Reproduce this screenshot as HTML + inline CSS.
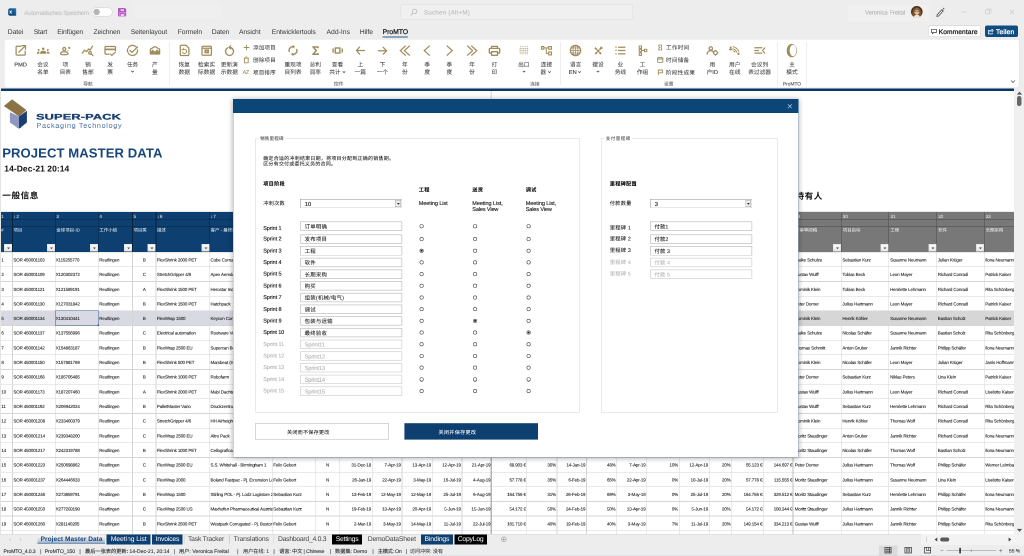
<!DOCTYPE html>
<html lang="zh"><head><meta charset="utf-8"><title>ProMTO</title>
<style>
html,body{margin:0;padding:0;}
body{width:1024px;height:556px;overflow:hidden;position:relative;background:#fff;font-family:"Liberation Sans","Noto Sans CJK SC",sans-serif;}
div,span.t{position:absolute;box-sizing:border-box;}
span.t{white-space:nowrap;text-rendering:geometricPrecision;}
span.k{-webkit-text-stroke:.12px;}
span.j{-webkit-text-stroke:.04px;}
svg{position:absolute;overflow:visible;}
#w{left:0;top:0;width:1024px;height:556px;overflow:hidden;zoom:2;transform:scale(.5);transform-origin:0 0;will-change:transform;}

.rb{background:#fff;border-radius:2.5px;box-shadow:0 0 1px rgba(0,0,0,.16);}
span.c{letter-spacing:-.115px;-webkit-text-stroke:.08px #1a1a1a;}
.inp{border:0.7px solid #c6c6c6;background:#fff;}
.radio{border:0.55px solid #4a4a4a;border-radius:50%;background:#fff;}

</style></head><body><div id="w">
<div style="left:0.00px;top:0.00px;width:1024.00px;height:91.00px;background:#ededed;"></div>
<div style="left:133.40px;top:3.60px;width:88.00px;height:14.40px;background:#efefef;"></div>
<div style="left:848.00px;top:4.80px;width:81.50px;height:16.20px;background:#f0f0f0;"></div>
<svg style="left:7.80px;top:7.80px" width="8.4" height="8.2" viewBox="0 0 8.4 8.2" ><defs><linearGradient id="xg" x1="1" y1="0" x2="0" y2="1"><stop offset="0" stop-color="#2a7fbe"/><stop offset=".55" stop-color="#125289"/><stop offset="1" stop-color="#0a3a68"/></linearGradient></defs><path d="M1.800.3H7.600a.6.600 0 0 1 .6.600V7.200a.6.600 0 0 1-.6.600H1.800L.2 6.700V1.400z" fill="url(#xg)"/><path d="M1.600 2.600 3.700 5.600M3.700 2.600 1.600 5.600" stroke="#fff" stroke-width=".75"/><path d="M5.300 1.200V7" stroke="#0b3a66" stroke-width=".5" opacity=".6"/></svg>
<span class="t k" style="font-size:6.2px;color:#c2c2c2;line-height:7px;top:9.5px;left:24.30px;letter-spacing:-0.246px;">Automatisches Speichern</span>
<div style="left:91.40px;top:7.30px;width:21.30px;height:9.30px;background:#fdfdfd;border:0.8px solid #cdcdcd;border-radius:4.700px;"></div>
<svg style="left:93.00px;top:8.50px" width="7.2" height="7.2" viewBox="0 0 7.2 7.2" ><circle cx="3.600" cy="3.500" r="3.150" fill="#b5b5b5"/></svg>
<svg style="left:118.10px;top:8.00px" width="8.2" height="8.4" viewBox="0 0 8.2 8.4" ><path d="M0 .7a.7.700 0 0 1 .7-.7h6.200l1.300 1.300v6.400a.7.700 0 0 1-.7.700h-6.800a.7.700 0 0 1-.7-.7z" fill="#b257c2"/><rect x="2.600" y="1.400" width="3.400" height="1.300" fill="#fbf3fc"/><rect x="2.800" y="6.200" width="3" height="1.600" fill="#fbf3fc"/><path d="M1.500 8V4.300h5.400V8" fill="none" stroke="#d9a9e2" stroke-width=".55"/></svg>
<div style="left:400.50px;top:4.20px;width:232.30px;height:15.10px;background:#f0f0f0;border:0.8px solid #dcdcdc;border-radius:2px;"></div>
<svg style="left:410.00px;top:8.50px" width="7.5" height="7.5" viewBox="0 0 7.5 7.5" ><circle cx="4.600" cy="2.900" r="2.300" fill="none" stroke="#b5b5b5" stroke-width=".8"/><path d="M3 4.600.6 7" stroke="#b5b5b5" stroke-width=".8"/></svg>
<span class="t k" style="font-size:6.2px;color:#bcbcbc;line-height:7px;top:9.0px;left:424.00px;letter-spacing:0.223px;">Suchen (Alt+M)</span>
<span class="t k" style="font-size:6px;color:#b3b3b3;line-height:6px;top:9.5px;left:865.00px;letter-spacing:-0.087px;">Veronica Freital</span>
<svg style="left:911.00px;top:6.20px" width="11.6" height="11.6" viewBox="0 0 11.6 11.6" ><clipPath id="av"><circle cx="5.800" cy="5.800" r="5.800"/></clipPath><g clip-path="url(#av)"><rect width="11.600" height="11.600" fill="#4a2c18"/><path d="M1 11.600C1 5 2 1.500 5.800 1.500S10.600 5 10.600 11.600z" fill="#7b5230"/><ellipse cx="5.900" cy="5.700" rx="2.500" ry="3.100" fill="#e6bb98"/><path d="M3.200 5c.3-2.300 5-2.400 5.400 0-1.400-1.100-3.800-1.100-5.400 0z" fill="#5d3a20"/><path d="M3.600 5.600h1.900M6.300 5.600h1.900" stroke="#3a2a22" stroke-width=".5"/><path d="M2.500 11.600c.6-2.200 2-2.900 3.400-2.900s2.800.7 3.400 2.900z" fill="#efe6dc"/></g></svg>
<svg style="left:935.00px;top:7.00px" width="10" height="10" viewBox="0 0 10 10" ><path d="M2.200 7.800 1.800 9.400l1.700-.3 4.800-5.200-1.400-1.300z" fill="#fff" stroke="#444" stroke-width=".8" stroke-linejoin="round"/><circle cx="8.600" cy="1.600" r=".8" fill="#3b78c0"/></svg>
<svg style="left:960.00px;top:8.00px" width="60" height="9" viewBox="0 0 60 9" ><path d="M1.500 4h5" stroke="#d0d0d0" stroke-width=".8"/><rect x="25.500" y="1.800" width="4.200" height="4.200" rx=".8" fill="none" stroke="#cfcfcf" stroke-width=".8"/><path d="M27 1.800v-.8h4v4h-.8" fill="none" stroke="#cfcfcf" stroke-width=".7"/><path d="M49.800 1.800l4.200 4.400M54 1.800l-4.200 4.400" stroke="#cfcfcf" stroke-width=".8"/></svg>
<span class="t" style="font-size:6.8px;color:#3a3a3a;line-height:7px;top:28.5px;left:7.75px;letter-spacing:-0.073px;">Datei</span>
<span class="t" style="font-size:6.8px;color:#3a3a3a;line-height:7px;top:28.5px;left:33.75px;letter-spacing:-0.222px;">Start</span>
<span class="t" style="font-size:6.8px;color:#3a3a3a;line-height:7px;top:28.5px;left:57.25px;letter-spacing:-0.136px;">Einfügen</span>
<span class="t" style="font-size:6.8px;color:#3a3a3a;line-height:7px;top:28.5px;left:93.50px;letter-spacing:-0.151px;">Zeichnen</span>
<span class="t" style="font-size:6.8px;color:#3a3a3a;line-height:7px;top:28.5px;left:130.75px;letter-spacing:-0.097px;">Seitenlayout</span>
<span class="t" style="font-size:6.8px;color:#3a3a3a;line-height:7px;top:28.5px;left:177.75px;letter-spacing:-0.097px;">Formeln</span>
<span class="t" style="font-size:6.8px;color:#3a3a3a;line-height:7px;top:28.5px;left:211.75px;letter-spacing:-0.128px;">Daten</span>
<span class="t" style="font-size:6.8px;color:#3a3a3a;line-height:7px;top:28.5px;left:239.00px;letter-spacing:-0.113px;">Ansicht</span>
<span class="t" style="font-size:6.8px;color:#3a3a3a;line-height:7px;top:28.5px;left:271.75px;letter-spacing:-0.089px;">Entwicklertools</span>
<span class="t" style="font-size:6.8px;color:#3a3a3a;line-height:7px;top:28.5px;left:326.50px;letter-spacing:0.010px;">Add-Ins</span>
<span class="t" style="font-size:6.8px;color:#3a3a3a;line-height:7px;top:28.5px;left:359.75px;letter-spacing:-0.070px;">Hilfe</span>
<span class="t" style="font-size:6.8px;color:#1d1d1d;line-height:7px;top:28.5px;left:382.60px;-webkit-text-stroke:.3px;letter-spacing:-0.026px;">ProMTO</span>
<div style="left:382.60px;top:36.40px;width:25.20px;height:1.10px;background:#245a8e;border-radius:.5px;"></div>
<div style="left:928.20px;top:25.70px;width:53.00px;height:11.50px;background:#fff;border:0.8px solid #cdcdcd;border-radius:2px;"></div>
<svg style="left:930.80px;top:28.60px" width="6" height="6" viewBox="0 0 6 6" ><path d="M.6.800h4.800v3.200H2.600L1.400 5.200V4H.6z" fill="none" stroke="#333" stroke-width=".7" stroke-linejoin="round"/></svg>
<span class="t" style="font-size:6.6px;color:#262626;line-height:7px;top:28.5px;left:938.70px;-webkit-text-stroke:.32px;letter-spacing:0.125px;">Kommentare</span>
<div style="left:985.20px;top:25.70px;width:32.80px;height:11.50px;background:#0f4c81;border-radius:2px;"></div>
<svg style="left:987.60px;top:28.40px" width="6" height="6" viewBox="0 0 6 6" ><path d="M2.400 2H.8v3.400h4V4.200" fill="none" stroke="#fff" stroke-width=".7"/><path d="M2.200 3.800C2.400 2.400 3.200 1.700 4.400 1.700V.7L5.800 2 4.400 3.300V2.500" fill="none" stroke="#fff" stroke-width=".7" stroke-linejoin="round"/></svg>
<span class="t" style="font-size:6.6px;color:#fff;line-height:7px;top:28.5px;left:996.00px;-webkit-text-stroke:.32px;letter-spacing:0.194px;">Teilen</span>
<div class="rb" style="left:4.70px;top:39.70px;width:1014.40px;height:48.00px;"></div>
<svg style="left:10.60px;top:40.60px" width="20" height="20" viewBox="-10 -10 20 20" fill="none" stroke="#9f8c5a" stroke-width="1.25" stroke-linecap="round" stroke-linejoin="round"><path d="M.4-4.300H-3.500a.9.900 0 0 0-.9.900V3.700a.9.900 0 0 0 .9.900H3.800a.9.900 0 0 0 .9-.9V.600"/><path d="M-1.600 1.700 4.900-4.800M1.500-4.900H5v3.500"/></svg>
<span class="t k" style="font-size:5.7px;color:#3d3d3d;line-height:6px;top:62.0px;left:20.60px;transform:translateX(-50%);">PMD</span>
<svg style="left:32.90px;top:40.60px" width="20" height="20" viewBox="-10 -10 20 20" fill="none" stroke="#9f8c5a" stroke-width="1.25" stroke-linecap="round" stroke-linejoin="round"><circle cx=".2" cy="-1.800" r="1.250" fill="#9f8c5a" stroke="none"/><path d="M-3 3.300c0-2.200 1-3.100 3.200-3.100s3.200.9 3.200 3.100z" fill="#9f8c5a" stroke="none"/><circle cx="-4.400" cy="-.5" r=".95" fill="#9f8c5a" stroke="none"/><circle cx="4.800" cy="-.5" r=".95" fill="#9f8c5a" stroke="none"/><path d="M-6.200 3.300c0-1.500.6-2.200 1.800-2.200.5 0 .9.100 1.100.4-.4.500-.5 1.100-.5 1.800zM6.600 3.300c0-1.500-.6-2.200-1.800-2.200-.5 0-.9.100-1.100.4.400.5.500 1.100.5 1.800z" fill="#9f8c5a" stroke="none"/></svg>
<span class="t j" style="font-size:5.7px;color:#3d3d3d;line-height:6px;top:62.0px;left:42.90px;transform:translateX(-50%);">会议</span>
<span class="t j" style="font-size:5.7px;color:#3d3d3d;line-height:6px;top:69.5px;left:42.90px;transform:translateX(-50%);">名单</span>
<svg style="left:55.30px;top:40.60px" width="20" height="20" viewBox="-10 -10 20 20" fill="none" stroke="#9f8c5a" stroke-width="1.25" stroke-linecap="round" stroke-linejoin="round"><circle cx="-1.250" cy="-1.500" r="1.500"/><path d="M-5 3.300c0-1.500 1.600-2.100 3.750-2.100s3.750.6 3.750 2.100c0 .7-1.400 1-3.750 1s-3.750-.3-3.750-1z"/><circle cx="3.800" cy="-2.600" r="1.100" fill="#9f8c5a" stroke="none"/><circle cx="2.400" cy="0" r=".55" fill="#9f8c5a" stroke="none"/></svg>
<span class="t j" style="font-size:5.7px;color:#3d3d3d;line-height:6px;top:62.0px;left:65.30px;transform:translateX(-50%);">项</span>
<span class="t j" style="font-size:5.7px;color:#3d3d3d;line-height:6px;top:69.5px;left:65.30px;transform:translateX(-50%);">目表</span>
<svg style="left:78.00px;top:40.60px" width="20" height="20" viewBox="-10 -10 20 20" fill="none" stroke="#9f8c5a" stroke-width="1.25" stroke-linecap="round" stroke-linejoin="round"><path d="M-5.800 2.700-3.300-.3-1.400 1.100.7-1.600 2.100-.3 4.600-4.400"/><circle cx="2" cy="2.400" r="1.300"/><path d="M3 3.400 5 5.200"/></svg>
<span class="t j" style="font-size:5.7px;color:#3d3d3d;line-height:6px;top:62.0px;left:88.00px;transform:translateX(-50%);">销</span>
<span class="t j" style="font-size:5.7px;color:#3d3d3d;line-height:6px;top:69.5px;left:88.00px;transform:translateX(-50%);">售部</span>
<svg style="left:100.10px;top:40.60px" width="20" height="20" viewBox="-10 -10 20 20" fill="none" stroke="#9f8c5a" stroke-width="1.25" stroke-linecap="round" stroke-linejoin="round"><path d="M-1.300 3.700H-4.100a.9.900 0 0 1-.9-.9V-3.100a.9.900 0 0 1 .9-.9H4.600a.9.900 0 0 1 .9.900V.100"/><path d="M-5-1.100H5.500" stroke-width="1.700" stroke-linecap="butt"/><path d="M.2 3.400 1.800 4.900 5.400 1.600" stroke-width="1.200"/></svg>
<span class="t j" style="font-size:5.7px;color:#3d3d3d;line-height:6px;top:62.0px;left:110.10px;transform:translateX(-50%);">发</span>
<span class="t j" style="font-size:5.7px;color:#3d3d3d;line-height:6px;top:69.5px;left:110.10px;transform:translateX(-50%);">票</span>
<svg style="left:122.40px;top:40.60px" width="20" height="20" viewBox="-10 -10 20 20" fill="none" stroke="#9f8c5a" stroke-width="1.25" stroke-linecap="round" stroke-linejoin="round"><path d="M4.100-3A5.050 5.050 0 1 0 5 -.6"/><path d="M-2.500 0-.6 1.900 5-3.600"/></svg>
<span class="t j" style="font-size:5.7px;color:#3d3d3d;line-height:6px;top:62.0px;left:132.40px;transform:translateX(-50%);">任务</span>
<svg style="left:130.90px;top:70.50px" width="3" height="2" viewBox="0 0 3 2" ><path d="M.3.400l1.200 1.200L2.700.4" fill="none" stroke="#3c3c3c" stroke-width=".8"/></svg>
<svg style="left:144.80px;top:40.60px" width="20" height="20" viewBox="-10 -10 20 20" fill="none" stroke="#9f8c5a" stroke-width="1.25" stroke-linecap="round" stroke-linejoin="round"><path d="M-4.600 3.500V-1.300L0-4 4.600-1.300V3.500z"/><path d="M-4.600 3.500V1.500L-2.200-1 0 1.200 2.100-1.200 4.600 1.500V3.500z" fill="#9f8c5a" stroke="none"/></svg>
<span class="t j" style="font-size:5.7px;color:#3d3d3d;line-height:6px;top:62.0px;left:154.80px;transform:translateX(-50%);">产</span>
<span class="t j" style="font-size:5.7px;color:#3d3d3d;line-height:6px;top:69.5px;left:154.80px;transform:translateX(-50%);">量</span>
<span class="t j" style="font-size:4.8px;color:#555;line-height:5px;top:82.0px;left:88.00px;transform:translateX(-50%);">导航</span>
<div style="left:169.50px;top:42.00px;width:0.70px;height:43.00px;background:#dcdcdc;"></div>
<svg style="left:174.30px;top:40.60px" width="20" height="20" viewBox="-10 -10 20 20" fill="none" stroke="#9f8c5a" stroke-width="1.25" stroke-linecap="round" stroke-linejoin="round"><path d="M-3.300-5.200H1.500L4.400-2.300V4.100a.9.900 0 0 1-.9.900H-3.300a.9.900 0 0 1-.9-.9V-4.300a.9.900 0 0 1 .9-.9z"/><path d="M-1.400-.6A2.100 2.100 0 1 1-2 1.500" stroke-width=".9"/><path d="M-2.900-.8h1.700v-1.600" stroke-width=".8"/></svg>
<span class="t j" style="font-size:5.7px;color:#3d3d3d;line-height:6px;top:62.0px;left:184.30px;transform:translateX(-50%);">恢复</span>
<span class="t j" style="font-size:5.7px;color:#3d3d3d;line-height:6px;top:69.5px;left:184.30px;transform:translateX(-50%);">数据</span>
<svg style="left:196.60px;top:40.60px" width="20" height="20" viewBox="-10 -10 20 20" fill="none" stroke="#9f8c5a" stroke-width="1.25" stroke-linecap="round" stroke-linejoin="round"><rect x="-4.500" y="-4.300" width="9.400" height="9.100" rx="1.100"/><path d="M-4.500-2.300H4.900"/><rect x="-2.100" y="-1.100" width="4.600" height="4" rx=".4" fill="#9f8c5a" stroke="none"/><path d="M.2.300V1.500M-.4.900H.8" stroke="#e9e2d2" stroke-width=".5"/></svg>
<span class="t j" style="font-size:5.7px;color:#3d3d3d;line-height:6px;top:62.0px;left:206.60px;transform:translateX(-50%);">检索实</span>
<span class="t j" style="font-size:5.7px;color:#3d3d3d;line-height:6px;top:69.5px;left:206.60px;transform:translateX(-50%);">际数据</span>
<svg style="left:219.30px;top:40.60px" width="20" height="20" viewBox="-10 -10 20 20" fill="none" stroke="#9f8c5a" stroke-width="1.25" stroke-linecap="round" stroke-linejoin="round"><path d="M-1.900-2.600A4 4 0 1 0 .6-3.050" stroke-width="1.300" stroke-dasharray="8.500 .9 5 .9 30"/><path d="M1.300-4.800-.6-3.100 1.300-1.500" stroke-width="1.100"/></svg>
<span class="t j" style="font-size:5.7px;color:#3d3d3d;line-height:6px;top:62.0px;left:229.30px;transform:translateX(-50%);">更新演</span>
<span class="t j" style="font-size:5.7px;color:#3d3d3d;line-height:6px;top:69.5px;left:229.30px;transform:translateX(-50%);">示数据</span>
<span class="t j" style="font-size:5.6px;color:#3d3d3d;line-height:6px;top:45.0px;left:253.00px;letter-spacing:0.104px;">添加项目</span>
<span class="t j" style="font-size:5.6px;color:#3d3d3d;line-height:6px;top:57.5px;left:253.00px;letter-spacing:0.104px;">删除项目</span>
<span class="t j" style="font-size:5.6px;color:#3d3d3d;line-height:6px;top:70.0px;left:253.00px;letter-spacing:0.104px;">项目排序</span>
<svg style="left:243.40px;top:44.30px" width="6" height="6" viewBox="0 0 6 6" ><path d="M3 .2v5.600M.2 3h5.600" stroke="#9f8c5a" stroke-width=".9"/></svg>
<svg style="left:243.70px;top:56.40px" width="5.6" height="7" viewBox="0 0 5.6 7" ><path d="M.9 1.700h3.800v4.600H.9zM.2 1.700h5.200M1.900.600h1.800" fill="none" stroke="#9f8c5a" stroke-width=".9"/></svg>
<span class="t k" style="font-size:5.4px;color:#9f8c5a;line-height:6px;top:69.5px;left:242.60px;letter-spacing:-.35px;-webkit-text-stroke:.1px;">AZ</span>
<svg style="left:283.00px;top:40.60px" width="20" height="20" viewBox="-10 -10 20 20" fill="none" stroke="#9f8c5a" stroke-width="1.25" stroke-linecap="round" stroke-linejoin="round"><path d="M-3.800 1A3.900 3.900 0 0 1 1-3.800M3.800-1A3.900 3.900 0 0 1-1 3.800" stroke-width="1.400"/><path d="M-.2-5.600 2-3.800-.3-2zM.2 5.600-2 3.800.3 2z" fill="#9f8c5a" stroke="none"/></svg>
<span class="t j" style="font-size:5.7px;color:#3d3d3d;line-height:6px;top:62.0px;left:293.00px;transform:translateX(-50%);">重现项</span>
<span class="t j" style="font-size:5.7px;color:#3d3d3d;line-height:6px;top:69.5px;left:293.00px;transform:translateX(-50%);">目列表</span>
<svg style="left:305.30px;top:40.60px" width="20" height="20" viewBox="-10 -10 20 20" fill="none" stroke="#9f8c5a" stroke-width="1.25" stroke-linecap="round" stroke-linejoin="round"><path d="M2.500-2.400V-3.500H-2.300L.7.150-2.300 3.700H2.500V2.500" stroke-width="1.500" stroke-linecap="butt" stroke-linejoin="miter"/></svg>
<span class="t j" style="font-size:5.7px;color:#3d3d3d;line-height:6px;top:62.0px;left:315.30px;transform:translateX(-50%);">总利</span>
<span class="t j" style="font-size:5.7px;color:#3d3d3d;line-height:6px;top:69.5px;left:315.30px;transform:translateX(-50%);">润率</span>
<svg style="left:327.50px;top:40.60px" width="20" height="20" viewBox="-10 -10 20 20" fill="none" stroke="#9f8c5a" stroke-width="1.25" stroke-linecap="round" stroke-linejoin="round"><rect x="-2.200" y="-2.500" width="4.600" height="5" stroke-width="1.400" stroke-linejoin="miter"/><path d="M-4.400-2V2.100M4.700-2V2.100" stroke-width="1.400" stroke-linecap="butt"/></svg>
<span class="t j" style="font-size:5.7px;color:#3d3d3d;line-height:6px;top:62.0px;left:337.50px;transform:translateX(-50%);">查看</span>
<span class="t j" style="font-size:5.7px;color:#3d3d3d;line-height:6px;top:69.5px;left:334.90px;transform:translateX(-50%);">共计</span>
<svg style="left:342.50px;top:70.90px" width="3" height="2" viewBox="0 0 3 2" ><path d="M.3.400l1.200 1.200L2.700.4" fill="none" stroke="#3c3c3c" stroke-width=".8"/></svg>
<svg style="left:350.30px;top:40.60px" width="20" height="20" viewBox="-10 -10 20 20" fill="none" stroke="#9f8c5a" stroke-width="1.25" stroke-linecap="round" stroke-linejoin="round"><path d="M4 0H-3.600M-.9-3.500-4 0-.9 3.600"/></svg>
<span class="t j" style="font-size:5.7px;color:#3d3d3d;line-height:6px;top:62.0px;left:360.30px;transform:translateX(-50%);">上</span>
<span class="t j" style="font-size:5.7px;color:#3d3d3d;line-height:6px;top:69.5px;left:360.30px;transform:translateX(-50%);">一篇</span>
<svg style="left:372.40px;top:40.60px" width="20" height="20" viewBox="-10 -10 20 20" fill="none" stroke="#9f8c5a" stroke-width="1.25" stroke-linecap="round" stroke-linejoin="round"><path d="M-4.100 .3H3.700M.7-3.200 4.100.3.700 3.700"/></svg>
<span class="t j" style="font-size:5.7px;color:#3d3d3d;line-height:6px;top:62.0px;left:382.40px;transform:translateX(-50%);">下</span>
<span class="t j" style="font-size:5.7px;color:#3d3d3d;line-height:6px;top:69.5px;left:382.40px;transform:translateX(-50%);">一个</span>
<svg style="left:394.80px;top:40.60px" width="20" height="20" viewBox="-10 -10 20 20" fill="none" stroke="#9f8c5a" stroke-width="1.25" stroke-linecap="round" stroke-linejoin="round"><path d="M.7-4.800-4.700.15.700 5.100M4.800-4.800-.6.150 4.800 5.100" stroke-linecap="butt" stroke-linejoin="miter"/></svg>
<span class="t j" style="font-size:5.7px;color:#3d3d3d;line-height:6px;top:62.0px;left:404.80px;transform:translateX(-50%);">年</span>
<span class="t j" style="font-size:5.7px;color:#3d3d3d;line-height:6px;top:69.5px;left:404.80px;transform:translateX(-50%);">份</span>
<svg style="left:417.20px;top:40.60px" width="20" height="20" viewBox="-10 -10 20 20" fill="none" stroke="#9f8c5a" stroke-width="1.25" stroke-linecap="round" stroke-linejoin="round"><path d="M2.700-4.800-2.700.15 2.700 5.100" stroke-linecap="butt" stroke-linejoin="miter"/></svg>
<span class="t j" style="font-size:5.7px;color:#3d3d3d;line-height:6px;top:62.0px;left:427.20px;transform:translateX(-50%);">季</span>
<span class="t j" style="font-size:5.7px;color:#3d3d3d;line-height:6px;top:69.5px;left:427.20px;transform:translateX(-50%);">度</span>
<svg style="left:439.40px;top:40.60px" width="20" height="20" viewBox="-10 -10 20 20" fill="none" stroke="#9f8c5a" stroke-width="1.25" stroke-linecap="round" stroke-linejoin="round"><path d="M-2.700-4.800 2.700.15-2.700 5.100" stroke-linecap="butt" stroke-linejoin="miter"/></svg>
<span class="t j" style="font-size:5.7px;color:#3d3d3d;line-height:6px;top:62.0px;left:449.40px;transform:translateX(-50%);">季</span>
<span class="t j" style="font-size:5.7px;color:#3d3d3d;line-height:6px;top:69.5px;left:449.40px;transform:translateX(-50%);">度</span>
<svg style="left:462.00px;top:40.60px" width="20" height="20" viewBox="-10 -10 20 20" fill="none" stroke="#9f8c5a" stroke-width="1.25" stroke-linecap="round" stroke-linejoin="round"><path d="M-4.800-4.800.6.150-4.800 5.100M-.7-4.800 4.700.15-.7 5.100" stroke-linecap="butt" stroke-linejoin="miter"/></svg>
<span class="t j" style="font-size:5.7px;color:#3d3d3d;line-height:6px;top:62.0px;left:472.00px;transform:translateX(-50%);">年</span>
<span class="t j" style="font-size:5.7px;color:#3d3d3d;line-height:6px;top:69.5px;left:472.00px;transform:translateX(-50%);">份</span>
<svg style="left:484.50px;top:40.60px" width="20" height="20" viewBox="-10 -10 20 20" fill="none" stroke="#9f8c5a" stroke-width="1.25" stroke-linecap="round" stroke-linejoin="round"><path d="M-3-2.100V-4.100H3V-2.100" stroke-width="1.300"/><path d="M-3 2.700H-4.300a.9.900 0 0 1-.9-.9V-1.200a.9.900 0 0 1 .9-.9H4.300a.9.900 0 0 1 .9.900V1.800a.9.900 0 0 1-.9.900H3" stroke-width="1.300"/><rect x="-3" y="1.200" width="6" height="3.600" stroke-width="1.300"/></svg>
<span class="t j" style="font-size:5.7px;color:#3d3d3d;line-height:6px;top:62.0px;left:494.50px;transform:translateX(-50%);">打</span>
<span class="t j" style="font-size:5.7px;color:#3d3d3d;line-height:6px;top:69.5px;left:494.50px;transform:translateX(-50%);">印</span>
<span class="t j" style="font-size:4.8px;color:#555;line-height:5px;top:82.0px;left:338.70px;transform:translateX(-50%);">控件</span>
<div style="left:508.30px;top:42.00px;width:0.70px;height:43.00px;background:#dcdcdc;"></div>
<svg style="left:513.80px;top:40.60px" width="20" height="20" viewBox="-10 -10 20 20" fill="none" stroke="#9f8c5a" stroke-width="1.25" stroke-linecap="round" stroke-linejoin="round"><g stroke-width=".9" stroke-dasharray=".9 .9" stroke-linecap="butt"><path d="M-3.700-4.300V4.300M-1.900-4.300V4.300M-.1-4.300V4.300M1.700-4.300V4.300M3.500-4.300V4.300" opacity=".8"/><path d="M-4.600-1.800H4.700M-4.600 0H4.700M-4.600 1.800H4.700" opacity=".4"/></g></svg>
<span class="t j" style="font-size:5.7px;color:#3d3d3d;line-height:6px;top:62.0px;left:523.80px;transform:translateX(-50%);">出口</span>
<svg style="left:522.30px;top:70.50px" width="3" height="2" viewBox="0 0 3 2" ><path d="M.3.400l1.200 1.200L2.700.4" fill="none" stroke="#3c3c3c" stroke-width=".8"/></svg>
<svg style="left:536.50px;top:40.60px" width="20" height="20" viewBox="-10 -10 20 20" fill="none" stroke="#9f8c5a" stroke-width="1.25" stroke-linecap="round" stroke-linejoin="round"><g stroke-linejoin="miter" stroke-width="1.100"><rect x="-5" y="-3.900" width="2.300" height="2.600"/><rect x="2.200" y="-3.900" width="2.800" height="2.600"/><rect x="2.200" y="1.500" width="2.800" height="2.900"/></g><path d="M-2.700-2.600H2.200M-.2-2.600V2.900H2.200" stroke-width="1" stroke-linecap="butt"/></svg>
<span class="t j" style="font-size:5.7px;color:#3d3d3d;line-height:6px;top:62.0px;left:546.50px;transform:translateX(-50%);">连接</span>
<span class="t j" style="font-size:5.7px;color:#3d3d3d;line-height:6px;top:69.5px;left:543.20px;transform:translateX(-50%);">器</span>
<svg style="left:548.00px;top:70.90px" width="3" height="2" viewBox="0 0 3 2" ><path d="M.3.400l1.200 1.200L2.700.4" fill="none" stroke="#3c3c3c" stroke-width=".8"/></svg>
<span class="t j" style="font-size:4.8px;color:#555;line-height:5px;top:82.0px;left:534.90px;transform:translateX(-50%);">连接</span>
<div style="left:560.30px;top:42.00px;width:0.70px;height:43.00px;background:#dcdcdc;"></div>
<svg style="left:565.60px;top:40.60px" width="20" height="20" viewBox="-10 -10 20 20" fill="none" stroke="#9f8c5a" stroke-width="1.25" stroke-linecap="round" stroke-linejoin="round"><circle cx="0" cy="0" r="5.100" stroke-width="1.300"/><ellipse cx="0" cy="0" rx="2.500" ry="5.100" stroke-width=".8"/><path d="M-5 0H5M-4.400-2.500H4.400M-4.400 2.500H4.400M0-5V5" stroke-width=".75"/></svg>
<span class="t j" style="font-size:5.7px;color:#3d3d3d;line-height:6px;top:62.0px;left:575.60px;transform:translateX(-50%);">语言</span>
<span class="t k" style="font-size:5.7px;color:#3d3d3d;line-height:6px;top:69.5px;left:572.80px;transform:translateX(-50%);">EN</span>
<svg style="left:578.20px;top:70.90px" width="3" height="2" viewBox="0 0 3 2" ><path d="M.3.400l1.200 1.200L2.700.4" fill="none" stroke="#3c3c3c" stroke-width=".8"/></svg>
<svg style="left:588.00px;top:40.60px" width="20" height="20" viewBox="-10 -10 20 20" fill="none" stroke="#9f8c5a" stroke-width="1.25" stroke-linecap="round" stroke-linejoin="round"><g transform="translate(.1 .5)"><path d="M-3.200-3.300 3.300 3.400M3.300-3.300-3.200 3.400" stroke-width="1.700" stroke-dasharray="2.600 .5" stroke-linecap="butt"/><path d="M2.300-3.900 3.900-3.900 3.900-2.300" stroke-width=".8"/></g></svg>
<span class="t j" style="font-size:5.7px;color:#3d3d3d;line-height:6px;top:62.0px;left:598.00px;transform:translateX(-50%);">摆设</span>
<svg style="left:596.50px;top:70.50px" width="3" height="2" viewBox="0 0 3 2" ><path d="M.3.400l1.200 1.200L2.700.4" fill="none" stroke="#3c3c3c" stroke-width=".8"/></svg>
<svg style="left:610.40px;top:40.60px" width="20" height="20" viewBox="-10 -10 20 20" fill="none" stroke="#9f8c5a" stroke-width="1.25" stroke-linecap="round" stroke-linejoin="round"><path d="M-2.400-3.300H5M-2.400 0H5M-2.400 3.400H5" stroke-linecap="butt"/><path d="M-5.100-3.300H-3.900M-5.100 0H-3.900M-5.100 3.400H-3.900" stroke-width="1.300" stroke-linecap="butt"/></svg>
<span class="t j" style="font-size:5.7px;color:#3d3d3d;line-height:6px;top:62.0px;left:620.40px;transform:translateX(-50%);">业</span>
<span class="t j" style="font-size:5.7px;color:#3d3d3d;line-height:6px;top:69.5px;left:620.40px;transform:translateX(-50%);">务线</span>
<svg style="left:632.50px;top:40.60px" width="20" height="20" viewBox="-10 -10 20 20" fill="none" stroke="#9f8c5a" stroke-width="1.25" stroke-linecap="round" stroke-linejoin="round"><g stroke-linejoin="miter" stroke-width="1"><rect x="-3.300" y="-4.500" width="2.300" height="2.300"/><rect x="-3.300" y="-1.150" width="2.300" height="2.300"/><rect x="-3.300" y="2.600" width="2.300" height="2.300"/><rect x="2" y="-1.150" width="2.300" height="2.300"/></g><path d="M-2.150-2.200V-1.150M-2.150 1.150V2.600M-1 0H2" stroke-width="1" stroke-linecap="butt"/></svg>
<span class="t j" style="font-size:5.7px;color:#3d3d3d;line-height:6px;top:62.0px;left:642.50px;transform:translateX(-50%);">工</span>
<span class="t j" style="font-size:5.7px;color:#3d3d3d;line-height:6px;top:69.5px;left:642.50px;transform:translateX(-50%);">作组</span>
<svg style="left:657.80px;top:44.30px" width="4.5" height="6" viewBox="0 0 4.5 6" ><path d="M.8.500h2.900v1.500L2.900 3l.8 1v1.500H.8V4l.8-1-.8-1z" fill="none" stroke="#9f8c5a" stroke-width=".85"/></svg>
<svg style="left:656.80px;top:56.70px" width="6.5" height="6.5" viewBox="0 0 6.5 6.5" ><rect x=".6" y="1.200" width="5.300" height="4.600" rx=".6" fill="none" stroke="#9f8c5a" stroke-width=".9"/><path d="M.6 2.600h5.300M2 .400v1.400M4.500.400v1.400" stroke="#9f8c5a" stroke-width=".9"/></svg>
<svg style="left:657.50px;top:69.00px" width="6" height="6.5" viewBox="0 0 6 6.5" ><path d="M.8.800v5.200M.8 1h4.200v2.800H.8" fill="none" stroke="#9f8c5a" stroke-width=".9"/></svg>
<span class="t j" style="font-size:5.6px;color:#3d3d3d;line-height:6px;top:45.0px;left:666.00px;letter-spacing:0.254px;">工作时间</span>
<span class="t j" style="font-size:5.6px;color:#3d3d3d;line-height:6px;top:57.5px;left:666.00px;letter-spacing:0.254px;">时间储备</span>
<span class="t j" style="font-size:5.6px;color:#3d3d3d;line-height:6px;top:70.0px;left:666.00px;letter-spacing:0.245px;">阶段性成果</span>
<svg style="left:702.30px;top:40.60px" width="20" height="20" viewBox="-10 -10 20 20" fill="none" stroke="#9f8c5a" stroke-width="1.25" stroke-linecap="round" stroke-linejoin="round"><circle cx="-1.700" cy="-2" r="1.700"/><path d="M-5.300 3.600C-5.300 1 -3.800 .2-1.700.2-.6.200.200.500.700 1"/><circle cx="3" cy="2.300" r="1.900"/><path d="M3-.3V.2M3 4.400V4.900M.4 2.300H.9M5.100 2.300H5.600" stroke-width=".9"/></svg>
<span class="t j" style="font-size:5.7px;color:#3d3d3d;line-height:6px;top:62.0px;left:712.30px;transform:translateX(-50%);">用</span>
<span class="t k" style="font-size:5.7px;color:#3d3d3d;line-height:6px;top:69.5px;left:712.30px;transform:translateX(-50%);">户ID</span>
<svg style="left:724.70px;top:40.60px" width="20" height="20" viewBox="-10 -10 20 20" fill="none" stroke="#9f8c5a" stroke-width="1.25" stroke-linecap="round" stroke-linejoin="round"><circle cx="-3.800" cy="-3.100" r="1" fill="#9f8c5a" stroke="none"/><path d="M-5.600-.2c0-1.300.7-1.900 1.800-1.900s1.800.6 1.800 1.900z" fill="#9f8c5a" stroke="none"/><path d="M-1.300-3.800C1.500-3.200 3.600-1.300 4.300 1.200M-1.500-1.700C.4-1.200 1.700 0 2.300 1.800M-.8.500C0 .9.500 1.500.800 2.300" stroke-width="1" stroke-dasharray="1.600 1"/><circle cx="4" cy="3.400" r="1.150" fill="#9f8c5a" stroke="none"/></svg>
<span class="t j" style="font-size:5.7px;color:#3d3d3d;line-height:6px;top:62.0px;left:734.70px;transform:translateX(-50%);">用户</span>
<span class="t j" style="font-size:5.7px;color:#3d3d3d;line-height:6px;top:69.5px;left:734.70px;transform:translateX(-50%);">在线</span>
<svg style="left:749.60px;top:40.60px" width="20" height="20" viewBox="-10 -10 20 20" fill="none" stroke="#9f8c5a" stroke-width="1.25" stroke-linecap="round" stroke-linejoin="round"><path d="M-4.600-2.700H2.100M-4.600 0H-1M-4.600 2.650H2.100"/><path d="M5.200-2.500 2.900 0 5.200 2.500"/></svg>
<span class="t j" style="font-size:5.7px;color:#3d3d3d;line-height:6px;top:62.0px;left:759.60px;transform:translateX(-50%);">会议列</span>
<span class="t j" style="font-size:5.7px;color:#3d3d3d;line-height:6px;top:69.5px;left:759.60px;transform:translateX(-50%);">表过滤器</span>
<span class="t j" style="font-size:4.8px;color:#555;line-height:5px;top:82.0px;left:668.80px;transform:translateX(-50%);">设置</span>
<div style="left:777.30px;top:42.00px;width:0.70px;height:43.00px;background:#dcdcdc;"></div>
<svg style="left:786.00px;top:43.00px" width="12" height="15" viewBox="0 0 12 15" ><path fill-rule="evenodd" fill="#9f8c5a" d="M5.800.9C8.700.900 10.900 3.900 10.900 7.600S8.700 14.300 5.800 14.300.700 11.300.7 7.600 2.900.900 5.800.9zM7 1.800C5.100 1.800 3.700 4.400 3.700 7.400S5.100 13.200 7 13.200 10.300 10.600 10.300 7.400 8.900 1.800 7 1.800z"/></svg>
<span class="t j" style="font-size:5.7px;color:#3d3d3d;line-height:6px;top:62.0px;left:792.00px;transform:translateX(-50%);">主</span>
<span class="t j" style="font-size:5.7px;color:#3d3d3d;line-height:6px;top:69.5px;left:792.00px;transform:translateX(-50%);">模式</span>
<span class="t k" style="font-size:4.8px;color:#555;line-height:5px;top:82.0px;left:792.00px;transform:translateX(-50%);">ProMTO</span>
<div style="left:805.80px;top:42.00px;width:0.70px;height:43.00px;background:#dcdcdc;"></div>
<svg style="left:1010.30px;top:80.20px" width="5" height="3" viewBox="0 0 5 3" ><path d="M.5.500l2 2 2-2" fill="none" stroke="#444" stroke-width=".7"/></svg>
<div style="left:0.80px;top:88.70px;width:1013.00px;height:2.20px;background:#0a3566;"></div>
<div style="left:0.00px;top:91.00px;width:1013.80px;height:443.10px;background:#fff;overflow:hidden;"></div>
<div style="left:0.00px;top:91.00px;width:1.20px;height:443.10px;background:#e4e4e4;"></div>
<div style="left:1013.80px;top:91.00px;width:10.20px;height:443.10px;background:#f0f0f0;"></div>
<svg style="left:1016.30px;top:91.20px" width="6" height="4" viewBox="0 0 6 4" ><path d="M.4 3.600 3 .6l2.600 3z" fill="#555"/></svg>
<div style="left:1017.00px;top:95.80px;width:4.60px;height:10.00px;background:#666;border-radius:2.3px;"></div>
<svg style="left:1016.30px;top:528.60px" width="6" height="4" viewBox="0 0 6 4" ><path d="M.4.400 3 3.400 5.600.4z" fill="#555"/></svg>
<svg style="left:0.00px;top:95.00px" width="30" height="36" viewBox="0 0 30 36" ><path d="M3.800 11 12.100 4.400 26.400 15 19 21.400z" fill="#8b7345"/><path d="M9.900 17.300 19 21.400V33.800L9.900 27.500z" fill="#8f99bf"/><path d="M19 21.400 26.900 15.800V27.500L19 33.800z" fill="#1c3f73"/></svg>
<span class="t" style="font-size:8px;color:#1a3f73;font-weight:bold;line-height:9px;top:113.0px;left:36.20px;transform:scaleX(1.60);transform-origin:0 50%;letter-spacing:.08px;-webkit-text-stroke:.3px;">SUPER-PACK</span>
<span class="t" style="font-size:6.4px;color:#4a6fa0;line-height:7px;top:122.0px;left:36.50px;transform:scaleX(1.13);transform-origin:0 50%;letter-spacing:.6px;">Packaging Technology</span>
<span class="t" style="font-size:13.1px;color:#17477a;font-weight:bold;line-height:15px;top:145.5px;left:2.20px;letter-spacing:0.077px;">PROJECT MASTER DATA</span>
<span class="t" style="font-size:8.5px;color:#111;font-weight:bold;line-height:10px;top:164.0px;left:4.30px;letter-spacing:0.049px;">14-Dec-21 20:14</span>
<span class="t" style="font-size:8.6px;color:#111;font-weight:bold;line-height:10px;top:190.5px;left:2.30px;letter-spacing:0.554px;">一般信息</span>
<span class="t" style="font-size:8.6px;color:#111;font-weight:bold;line-height:10px;top:191.0px;left:795.50px;letter-spacing:0.537px;">持有人</span>
<div style="left:1.20px;top:211.30px;width:1012.60px;height:0.70px;background:#d4d4d4;"></div>
<div style="left:1.20px;top:211.90px;width:792.30px;height:40.30px;background:#0d3f70;"></div>
<div style="left:793.50px;top:211.90px;width:220.30px;height:40.30px;background:#787878;"></div>
<div style="left:1.20px;top:219.40px;width:1012.60px;height:0.60px;background:rgba(0,0,0,.4);"></div>
<div style="left:1.20px;top:226.10px;width:1012.60px;height:0.60px;background:rgba(0,0,0,.4);"></div>
<span class="t k" style="font-size:4.6px;color:#e3e9f1;line-height:5px;top:214.0px;left:1.10px;-webkit-text-stroke:.04px;">1</span>
<span class="t k" style="font-size:4.4px;color:#f2f5f9;line-height:5px;top:227.5px;left:1.10px;-webkit-text-stroke:0;">#</span>
<div style="left:4.20px;top:244.00px;width:8.00px;height:7.70px;background:linear-gradient(#fbfbfb,#e6e6e6);border:0.3px solid #d6d6d6;"><svg style="left:2.5px;top:3px" width="2.900" height="1.600" viewBox="0 0 2.900 1.600"><path d="M0 0h2.900L1.450 1.600z" fill="#3a3a3a"/></svg></div>
<div style="left:12.20px;top:211.90px;width:0.60px;height:40.30px;background:rgba(0,0,0,.45);"></div>
<span class="t k" style="font-size:4.6px;color:#e3e9f1;line-height:5px;top:214.0px;left:13.50px;-webkit-text-stroke:.04px;letter-spacing:0.520px;">↓2</span>
<span class="t j" style="font-size:4.4px;color:#f2f5f9;line-height:5px;top:227.5px;left:13.50px;-webkit-text-stroke:0;">项目</span>
<div style="left:47.10px;top:244.00px;width:8.00px;height:7.70px;background:linear-gradient(#fbfbfb,#e6e6e6);border:0.3px solid #d6d6d6;"><svg style="left:2.5px;top:3px" width="2.900" height="1.600" viewBox="0 0 2.900 1.600"><path d="M0 0h2.900L1.450 1.600z" fill="#3a3a3a"/></svg></div>
<div style="left:55.10px;top:211.90px;width:0.60px;height:40.30px;background:rgba(0,0,0,.45);"></div>
<span class="t k" style="font-size:4.6px;color:#e3e9f1;line-height:5px;top:214.0px;left:56.40px;-webkit-text-stroke:.04px;">3</span>
<span class="t j" style="font-size:4.4px;color:#f2f5f9;line-height:5px;top:227.5px;left:56.40px;-webkit-text-stroke:0;">全球项目-ID</span>
<div style="left:90.10px;top:244.00px;width:8.00px;height:7.70px;background:linear-gradient(#fbfbfb,#e6e6e6);border:0.3px solid #d6d6d6;"><svg style="left:2.5px;top:3px" width="2.900" height="1.600" viewBox="0 0 2.900 1.600"><path d="M0 0h2.900L1.450 1.600z" fill="#3a3a3a"/></svg></div>
<div style="left:98.10px;top:211.90px;width:0.60px;height:40.30px;background:rgba(0,0,0,.45);"></div>
<span class="t k" style="font-size:4.6px;color:#e3e9f1;line-height:5px;top:214.0px;left:99.40px;-webkit-text-stroke:.04px;">4</span>
<span class="t j" style="font-size:4.4px;color:#f2f5f9;line-height:5px;top:227.5px;left:99.40px;-webkit-text-stroke:0;">工作小组</span>
<div style="left:124.20px;top:244.00px;width:8.00px;height:7.70px;background:linear-gradient(#fbfbfb,#e6e6e6);border:0.3px solid #d6d6d6;"><svg style="left:2.5px;top:3px" width="2.900" height="1.600" viewBox="0 0 2.900 1.600"><path d="M0 0h2.900L1.450 1.600z" fill="#3a3a3a"/></svg></div>
<div style="left:132.20px;top:211.90px;width:0.60px;height:40.30px;background:rgba(0,0,0,.45);"></div>
<span class="t k" style="font-size:4.6px;color:#e3e9f1;line-height:5px;top:214.0px;left:133.50px;-webkit-text-stroke:.04px;">5</span>
<span class="t j" style="font-size:4.4px;color:#f2f5f9;line-height:5px;top:227.5px;left:133.50px;-webkit-text-stroke:0;">项目类</span>
<div style="left:147.70px;top:244.00px;width:8.00px;height:7.70px;background:linear-gradient(#fbfbfb,#e6e6e6);border:0.3px solid #d6d6d6;"><svg style="left:2.5px;top:3px" width="2.900" height="1.600" viewBox="0 0 2.900 1.600"><path d="M0 0h2.900L1.450 1.600z" fill="#3a3a3a"/></svg></div>
<div style="left:155.70px;top:211.90px;width:0.60px;height:40.30px;background:rgba(0,0,0,.45);"></div>
<span class="t k" style="font-size:4.6px;color:#e3e9f1;line-height:5px;top:214.0px;left:157.00px;-webkit-text-stroke:.04px;letter-spacing:0.520px;">↓6</span>
<span class="t j" style="font-size:4.4px;color:#f2f5f9;line-height:5px;top:227.5px;left:157.00px;-webkit-text-stroke:0;">描述</span>
<div style="left:201.30px;top:244.00px;width:8.00px;height:7.70px;background:linear-gradient(#fbfbfb,#e6e6e6);border:0.3px solid #d6d6d6;"><svg style="left:2.5px;top:3px" width="2.900" height="1.600" viewBox="0 0 2.900 1.600"><path d="M0 0h2.900L1.450 1.600z" fill="#3a3a3a"/></svg></div>
<div style="left:209.30px;top:211.90px;width:0.60px;height:40.30px;background:rgba(0,0,0,.45);"></div>
<span class="t k" style="font-size:4.6px;color:#e3e9f1;line-height:5px;top:214.0px;left:210.60px;-webkit-text-stroke:.04px;letter-spacing:0.520px;">↓7</span>
<span class="t j" style="font-size:4.4px;color:#f2f5f9;line-height:5px;top:227.5px;left:210.60px;-webkit-text-stroke:0;">客户 - 最终目的地</span>
<div style="left:264.10px;top:244.00px;width:8.00px;height:7.70px;background:linear-gradient(#fbfbfb,#e6e6e6);border:0.3px solid #d6d6d6;"><svg style="left:2.5px;top:3px" width="2.900" height="1.600" viewBox="0 0 2.900 1.600"><path d="M0 0h2.900L1.450 1.600z" fill="#3a3a3a"/></svg></div>
<div style="left:272.10px;top:211.90px;width:0.60px;height:40.30px;background:rgba(0,0,0,.45);"></div>
<span class="t k" style="font-size:4.6px;color:#e3e9f1;line-height:5px;top:214.0px;left:273.40px;-webkit-text-stroke:.04px;">8</span>
<span class="t j" style="font-size:4.4px;color:#f2f5f9;line-height:5px;top:227.5px;left:273.40px;-webkit-text-stroke:0;">销售</span>
<div style="left:307.60px;top:244.00px;width:8.00px;height:7.70px;background:linear-gradient(#fbfbfb,#e6e6e6);border:0.3px solid #d6d6d6;"><svg style="left:2.5px;top:3px" width="2.900" height="1.600" viewBox="0 0 2.900 1.600"><path d="M0 0h2.900L1.450 1.600z" fill="#3a3a3a"/></svg></div>
<div style="left:315.60px;top:211.90px;width:0.60px;height:40.30px;background:rgba(0,0,0,.45);"></div>
<span class="t k" style="font-size:4.6px;color:#e3e9f1;line-height:5px;top:214.0px;left:316.90px;-webkit-text-stroke:.04px;">9</span>
<span class="t j" style="font-size:4.4px;color:#f2f5f9;line-height:5px;top:227.5px;left:316.90px;-webkit-text-stroke:0;">新</span>
<div style="left:330.90px;top:244.00px;width:8.00px;height:7.70px;background:linear-gradient(#fbfbfb,#e6e6e6);border:0.3px solid #d6d6d6;"><svg style="left:2.5px;top:3px" width="2.900" height="1.600" viewBox="0 0 2.900 1.600"><path d="M0 0h2.900L1.450 1.600z" fill="#3a3a3a"/></svg></div>
<div style="left:338.90px;top:211.90px;width:0.60px;height:40.30px;background:rgba(0,0,0,.45);"></div>
<span class="t k" style="font-size:4.6px;color:#e3e9f1;line-height:5px;top:214.0px;left:340.20px;-webkit-text-stroke:.04px;">10</span>
<span class="t j" style="font-size:4.4px;color:#f2f5f9;line-height:5px;top:227.5px;left:340.20px;-webkit-text-stroke:0;">下单</span>
<div style="left:363.90px;top:244.00px;width:8.00px;height:7.70px;background:linear-gradient(#fbfbfb,#e6e6e6);border:0.3px solid #d6d6d6;"><svg style="left:2.5px;top:3px" width="2.900" height="1.600" viewBox="0 0 2.900 1.600"><path d="M0 0h2.900L1.450 1.600z" fill="#3a3a3a"/></svg></div>
<div style="left:371.90px;top:211.90px;width:0.60px;height:40.30px;background:rgba(0,0,0,.45);"></div>
<span class="t k" style="font-size:4.6px;color:#e3e9f1;line-height:5px;top:214.0px;left:373.20px;-webkit-text-stroke:.04px;">11</span>
<span class="t j" style="font-size:4.4px;color:#f2f5f9;line-height:5px;top:227.5px;left:373.20px;-webkit-text-stroke:0;">计划开始</span>
<div style="left:393.70px;top:244.00px;width:8.00px;height:7.70px;background:linear-gradient(#fbfbfb,#e6e6e6);border:0.3px solid #d6d6d6;"><svg style="left:2.5px;top:3px" width="2.900" height="1.600" viewBox="0 0 2.900 1.600"><path d="M0 0h2.900L1.450 1.600z" fill="#3a3a3a"/></svg></div>
<div style="left:401.70px;top:211.90px;width:0.60px;height:40.30px;background:rgba(0,0,0,.45);"></div>
<span class="t k" style="font-size:4.6px;color:#e3e9f1;line-height:5px;top:214.0px;left:403.00px;-webkit-text-stroke:.04px;">12</span>
<span class="t j" style="font-size:4.4px;color:#f2f5f9;line-height:5px;top:227.5px;left:403.00px;-webkit-text-stroke:0;">计划结束</span>
<div style="left:423.90px;top:244.00px;width:8.00px;height:7.70px;background:linear-gradient(#fbfbfb,#e6e6e6);border:0.3px solid #d6d6d6;"><svg style="left:2.5px;top:3px" width="2.900" height="1.600" viewBox="0 0 2.900 1.600"><path d="M0 0h2.900L1.450 1.600z" fill="#3a3a3a"/></svg></div>
<div style="left:431.90px;top:211.90px;width:0.60px;height:40.30px;background:rgba(0,0,0,.45);"></div>
<span class="t k" style="font-size:4.6px;color:#e3e9f1;line-height:5px;top:214.0px;left:433.20px;-webkit-text-stroke:.04px;">13</span>
<span class="t j" style="font-size:4.4px;color:#f2f5f9;line-height:5px;top:227.5px;left:433.20px;-webkit-text-stroke:0;">发货</span>
<div style="left:453.70px;top:244.00px;width:8.00px;height:7.70px;background:linear-gradient(#fbfbfb,#e6e6e6);border:0.3px solid #d6d6d6;"><svg style="left:2.5px;top:3px" width="2.900" height="1.600" viewBox="0 0 2.900 1.600"><path d="M0 0h2.900L1.450 1.600z" fill="#3a3a3a"/></svg></div>
<div style="left:461.70px;top:211.90px;width:0.60px;height:40.30px;background:rgba(0,0,0,.45);"></div>
<span class="t k" style="font-size:4.6px;color:#e3e9f1;line-height:5px;top:214.0px;left:463.00px;-webkit-text-stroke:.04px;">14</span>
<span class="t j" style="font-size:4.4px;color:#f2f5f9;line-height:5px;top:227.5px;left:463.00px;-webkit-text-stroke:0;">验收</span>
<div style="left:483.30px;top:244.00px;width:8.00px;height:7.70px;background:linear-gradient(#fbfbfb,#e6e6e6);border:0.3px solid #d6d6d6;"><svg style="left:2.5px;top:3px" width="2.900" height="1.600" viewBox="0 0 2.900 1.600"><path d="M0 0h2.900L1.450 1.600z" fill="#3a3a3a"/></svg></div>
<div style="left:491.30px;top:211.90px;width:0.60px;height:40.30px;background:rgba(0,0,0,.45);"></div>
<span class="t k" style="font-size:4.6px;color:#e3e9f1;line-height:5px;top:214.0px;left:492.60px;-webkit-text-stroke:.04px;">15</span>
<span class="t j" style="font-size:4.4px;color:#f2f5f9;line-height:5px;top:227.5px;left:492.60px;-webkit-text-stroke:0;">订单价值</span>
<div style="left:518.60px;top:244.00px;width:8.00px;height:7.70px;background:linear-gradient(#fbfbfb,#e6e6e6);border:0.3px solid #d6d6d6;"><svg style="left:2.5px;top:3px" width="2.900" height="1.600" viewBox="0 0 2.900 1.600"><path d="M0 0h2.900L1.450 1.600z" fill="#3a3a3a"/></svg></div>
<div style="left:526.60px;top:211.90px;width:0.60px;height:40.30px;background:rgba(0,0,0,.45);"></div>
<span class="t k" style="font-size:4.6px;color:#e3e9f1;line-height:5px;top:214.0px;left:527.90px;-webkit-text-stroke:.04px;">16</span>
<span class="t j" style="font-size:4.4px;color:#f2f5f9;line-height:5px;top:227.5px;left:527.90px;-webkit-text-stroke:0;">预付</span>
<div style="left:548.70px;top:244.00px;width:8.00px;height:7.70px;background:linear-gradient(#fbfbfb,#e6e6e6);border:0.3px solid #d6d6d6;"><svg style="left:2.5px;top:3px" width="2.900" height="1.600" viewBox="0 0 2.900 1.600"><path d="M0 0h2.900L1.450 1.600z" fill="#3a3a3a"/></svg></div>
<div style="left:556.70px;top:211.90px;width:0.60px;height:40.30px;background:rgba(0,0,0,.45);"></div>
<span class="t k" style="font-size:4.6px;color:#e3e9f1;line-height:5px;top:214.0px;left:558.00px;-webkit-text-stroke:.04px;">17</span>
<span class="t j" style="font-size:4.4px;color:#f2f5f9;line-height:5px;top:227.5px;left:558.00px;-webkit-text-stroke:0;">日期</span>
<div style="left:578.20px;top:244.00px;width:8.00px;height:7.70px;background:linear-gradient(#fbfbfb,#e6e6e6);border:0.3px solid #d6d6d6;"><svg style="left:2.5px;top:3px" width="2.900" height="1.600" viewBox="0 0 2.900 1.600"><path d="M0 0h2.900L1.450 1.600z" fill="#3a3a3a"/></svg></div>
<div style="left:586.20px;top:211.90px;width:0.60px;height:40.30px;background:rgba(0,0,0,.45);"></div>
<span class="t k" style="font-size:4.6px;color:#e3e9f1;line-height:5px;top:214.0px;left:587.50px;-webkit-text-stroke:.04px;">18</span>
<span class="t j" style="font-size:4.4px;color:#f2f5f9;line-height:5px;top:227.5px;left:587.50px;-webkit-text-stroke:0;">交付</span>
<div style="left:608.40px;top:244.00px;width:8.00px;height:7.70px;background:linear-gradient(#fbfbfb,#e6e6e6);border:0.3px solid #d6d6d6;"><svg style="left:2.5px;top:3px" width="2.900" height="1.600" viewBox="0 0 2.900 1.600"><path d="M0 0h2.900L1.450 1.600z" fill="#3a3a3a"/></svg></div>
<div style="left:616.40px;top:211.90px;width:0.60px;height:40.30px;background:rgba(0,0,0,.45);"></div>
<span class="t k" style="font-size:4.6px;color:#e3e9f1;line-height:5px;top:214.0px;left:617.70px;-webkit-text-stroke:.04px;">19</span>
<span class="t j" style="font-size:4.4px;color:#f2f5f9;line-height:5px;top:227.5px;left:617.70px;-webkit-text-stroke:0;">日期</span>
<div style="left:638.40px;top:244.00px;width:8.00px;height:7.70px;background:linear-gradient(#fbfbfb,#e6e6e6);border:0.3px solid #d6d6d6;"><svg style="left:2.5px;top:3px" width="2.900" height="1.600" viewBox="0 0 2.900 1.600"><path d="M0 0h2.900L1.450 1.600z" fill="#3a3a3a"/></svg></div>
<div style="left:646.40px;top:211.90px;width:0.60px;height:40.30px;background:rgba(0,0,0,.45);"></div>
<span class="t k" style="font-size:4.6px;color:#e3e9f1;line-height:5px;top:214.0px;left:647.70px;-webkit-text-stroke:.04px;">20</span>
<span class="t j" style="font-size:4.4px;color:#f2f5f9;line-height:5px;top:227.5px;left:647.70px;-webkit-text-stroke:0;">验收</span>
<div style="left:670.90px;top:244.00px;width:8.00px;height:7.70px;background:linear-gradient(#fbfbfb,#e6e6e6);border:0.3px solid #d6d6d6;"><svg style="left:2.5px;top:3px" width="2.900" height="1.600" viewBox="0 0 2.900 1.600"><path d="M0 0h2.900L1.450 1.600z" fill="#3a3a3a"/></svg></div>
<div style="left:678.90px;top:211.90px;width:0.60px;height:40.30px;background:rgba(0,0,0,.45);"></div>
<span class="t k" style="font-size:4.6px;color:#e3e9f1;line-height:5px;top:214.0px;left:680.20px;-webkit-text-stroke:.04px;">21</span>
<span class="t j" style="font-size:4.4px;color:#f2f5f9;line-height:5px;top:227.5px;left:680.20px;-webkit-text-stroke:0;">日期</span>
<div style="left:700.90px;top:244.00px;width:8.00px;height:7.70px;background:linear-gradient(#fbfbfb,#e6e6e6);border:0.3px solid #d6d6d6;"><svg style="left:2.5px;top:3px" width="2.900" height="1.600" viewBox="0 0 2.900 1.600"><path d="M0 0h2.900L1.450 1.600z" fill="#3a3a3a"/></svg></div>
<div style="left:708.90px;top:211.90px;width:0.60px;height:40.30px;background:rgba(0,0,0,.45);"></div>
<span class="t k" style="font-size:4.6px;color:#e3e9f1;line-height:5px;top:214.0px;left:710.20px;-webkit-text-stroke:.04px;">22</span>
<span class="t j" style="font-size:4.4px;color:#f2f5f9;line-height:5px;top:227.5px;left:710.20px;-webkit-text-stroke:0;">保留</span>
<div style="left:723.40px;top:244.00px;width:8.00px;height:7.70px;background:linear-gradient(#fbfbfb,#e6e6e6);border:0.3px solid #d6d6d6;"><svg style="left:2.5px;top:3px" width="2.900" height="1.600" viewBox="0 0 2.900 1.600"><path d="M0 0h2.900L1.450 1.600z" fill="#3a3a3a"/></svg></div>
<div style="left:731.40px;top:211.90px;width:0.60px;height:40.30px;background:rgba(0,0,0,.45);"></div>
<span class="t k" style="font-size:4.6px;color:#e3e9f1;line-height:5px;top:214.0px;left:732.70px;-webkit-text-stroke:.04px;">23</span>
<span class="t j" style="font-size:4.4px;color:#f2f5f9;line-height:5px;top:227.5px;left:732.70px;-webkit-text-stroke:0;">已付</span>
<div style="left:755.10px;top:244.00px;width:8.00px;height:7.70px;background:linear-gradient(#fbfbfb,#e6e6e6);border:0.3px solid #d6d6d6;"><svg style="left:2.5px;top:3px" width="2.900" height="1.600" viewBox="0 0 2.900 1.600"><path d="M0 0h2.900L1.450 1.600z" fill="#3a3a3a"/></svg></div>
<div style="left:763.10px;top:211.90px;width:0.60px;height:40.30px;background:rgba(0,0,0,.45);"></div>
<span class="t k" style="font-size:4.6px;color:#e3e9f1;line-height:5px;top:214.0px;left:764.40px;-webkit-text-stroke:.04px;">24</span>
<span class="t j" style="font-size:4.4px;color:#f2f5f9;line-height:5px;top:227.5px;left:764.40px;-webkit-text-stroke:0;">未付</span>
<div style="left:785.20px;top:244.00px;width:8.00px;height:7.70px;background:linear-gradient(#fbfbfb,#e6e6e6);border:0.3px solid #d6d6d6;"><svg style="left:2.5px;top:3px" width="2.900" height="1.600" viewBox="0 0 2.900 1.600"><path d="M0 0h2.900L1.450 1.600z" fill="#3a3a3a"/></svg></div>
<div style="left:793.20px;top:211.90px;width:0.60px;height:40.30px;background:rgba(0,0,0,.38);"></div>
<span class="t k" style="font-size:4.6px;color:#e3e9f1;line-height:5px;top:214.0px;left:795.10px;-webkit-text-stroke:.04px;">29</span>
<span class="t j" style="font-size:4.4px;color:#f2f5f9;line-height:5px;top:227.5px;left:795.10px;-webkit-text-stroke:0;">订单审阅稿</span>
<div style="left:832.90px;top:244.00px;width:8.00px;height:7.70px;background:linear-gradient(#fbfbfb,#e6e6e6);border:0.3px solid #d6d6d6;"><svg style="left:2.5px;top:3px" width="2.900" height="1.600" viewBox="0 0 2.900 1.600"><path d="M0 0h2.900L1.450 1.600z" fill="#3a3a3a"/></svg></div>
<div style="left:840.90px;top:211.90px;width:0.60px;height:40.30px;background:rgba(0,0,0,.38);"></div>
<span class="t k" style="font-size:4.6px;color:#e3e9f1;line-height:5px;top:214.0px;left:842.80px;-webkit-text-stroke:.04px;">30</span>
<span class="t j" style="font-size:4.4px;color:#f2f5f9;line-height:5px;top:227.5px;left:842.80px;-webkit-text-stroke:0;">项目启动</span>
<div style="left:880.60px;top:244.00px;width:8.00px;height:7.70px;background:linear-gradient(#fbfbfb,#e6e6e6);border:0.3px solid #d6d6d6;"><svg style="left:2.5px;top:3px" width="2.900" height="1.600" viewBox="0 0 2.900 1.600"><path d="M0 0h2.900L1.450 1.600z" fill="#3a3a3a"/></svg></div>
<div style="left:888.60px;top:211.90px;width:0.60px;height:40.30px;background:rgba(0,0,0,.38);"></div>
<span class="t k" style="font-size:4.6px;color:#e3e9f1;line-height:5px;top:214.0px;left:890.50px;-webkit-text-stroke:.04px;">31</span>
<span class="t j" style="font-size:4.4px;color:#f2f5f9;line-height:5px;top:227.5px;left:890.50px;-webkit-text-stroke:0;">工程</span>
<div style="left:928.30px;top:244.00px;width:8.00px;height:7.70px;background:linear-gradient(#fbfbfb,#e6e6e6);border:0.3px solid #d6d6d6;"><svg style="left:2.5px;top:3px" width="2.900" height="1.600" viewBox="0 0 2.900 1.600"><path d="M0 0h2.900L1.450 1.600z" fill="#3a3a3a"/></svg></div>
<div style="left:936.30px;top:211.90px;width:0.60px;height:40.30px;background:rgba(0,0,0,.38);"></div>
<span class="t k" style="font-size:4.6px;color:#e3e9f1;line-height:5px;top:214.0px;left:938.20px;-webkit-text-stroke:.04px;">32</span>
<span class="t j" style="font-size:4.4px;color:#f2f5f9;line-height:5px;top:227.5px;left:938.20px;-webkit-text-stroke:0;">软件</span>
<div style="left:975.80px;top:244.00px;width:8.00px;height:7.70px;background:linear-gradient(#fbfbfb,#e6e6e6);border:0.3px solid #d6d6d6;"><svg style="left:2.5px;top:3px" width="2.900" height="1.600" viewBox="0 0 2.900 1.600"><path d="M0 0h2.900L1.450 1.600z" fill="#3a3a3a"/></svg></div>
<div style="left:983.80px;top:211.90px;width:0.60px;height:40.30px;background:rgba(0,0,0,.38);"></div>
<span class="t k" style="font-size:4.6px;color:#e3e9f1;line-height:5px;top:214.0px;left:985.70px;-webkit-text-stroke:.04px;">33</span>
<span class="t j" style="font-size:4.4px;color:#f2f5f9;line-height:5px;top:227.5px;left:985.70px;-webkit-text-stroke:0;">长期采购</span>
<div style="left:1.20px;top:310.84px;width:792.30px;height:14.66px;background:#d9d9e3;"></div>
<div style="left:793.50px;top:310.84px;width:220.30px;height:14.66px;background:#d6d6d6;"></div>
<div style="left:1.20px;top:251.85px;width:1012.60px;height:0.70px;background:#d5d5d5;"></div>
<div style="left:1.20px;top:266.51px;width:1012.60px;height:0.70px;background:#d5d5d5;"></div>
<div style="left:1.20px;top:281.17px;width:1012.60px;height:0.70px;background:#d5d5d5;"></div>
<div style="left:1.20px;top:295.83px;width:1012.60px;height:0.70px;background:#d5d5d5;"></div>
<div style="left:1.20px;top:310.49px;width:1012.60px;height:0.70px;background:#d5d5d5;"></div>
<div style="left:1.20px;top:325.15px;width:1012.60px;height:0.70px;background:#d5d5d5;"></div>
<div style="left:1.20px;top:339.81px;width:1012.60px;height:0.70px;background:#d5d5d5;"></div>
<div style="left:1.20px;top:354.47px;width:1012.60px;height:0.70px;background:#d5d5d5;"></div>
<div style="left:1.20px;top:369.13px;width:1012.60px;height:0.70px;background:#d5d5d5;"></div>
<div style="left:1.20px;top:383.79px;width:1012.60px;height:0.70px;background:#d5d5d5;"></div>
<div style="left:1.20px;top:398.45px;width:1012.60px;height:0.70px;background:#d5d5d5;"></div>
<div style="left:1.20px;top:413.11px;width:1012.60px;height:0.70px;background:#d5d5d5;"></div>
<div style="left:1.20px;top:427.77px;width:1012.60px;height:0.70px;background:#d5d5d5;"></div>
<div style="left:1.20px;top:442.43px;width:1012.60px;height:0.70px;background:#d5d5d5;"></div>
<div style="left:1.20px;top:457.09px;width:1012.60px;height:0.70px;background:#d5d5d5;"></div>
<div style="left:1.20px;top:471.75px;width:1012.60px;height:0.70px;background:#d5d5d5;"></div>
<div style="left:1.20px;top:486.41px;width:1012.60px;height:0.70px;background:#d5d5d5;"></div>
<div style="left:1.20px;top:501.07px;width:1012.60px;height:0.70px;background:#d5d5d5;"></div>
<div style="left:1.20px;top:515.73px;width:1012.60px;height:0.70px;background:#d5d5d5;"></div>
<div style="left:1.20px;top:530.39px;width:1012.60px;height:0.70px;background:#d5d5d5;"></div>
<div style="left:12.15px;top:252.20px;width:0.70px;height:281.90px;background:#d5d5d5;"></div>
<div style="left:55.05px;top:252.20px;width:0.70px;height:281.90px;background:#d5d5d5;"></div>
<div style="left:98.05px;top:252.20px;width:0.70px;height:281.90px;background:#d5d5d5;"></div>
<div style="left:132.15px;top:252.20px;width:0.70px;height:281.90px;background:#d5d5d5;"></div>
<div style="left:155.65px;top:252.20px;width:0.70px;height:281.90px;background:#d5d5d5;"></div>
<div style="left:209.25px;top:252.20px;width:0.70px;height:281.90px;background:#d5d5d5;"></div>
<div style="left:272.05px;top:252.20px;width:0.70px;height:281.90px;background:#d5d5d5;"></div>
<div style="left:315.55px;top:252.20px;width:0.70px;height:281.90px;background:#d5d5d5;"></div>
<div style="left:338.85px;top:252.20px;width:0.70px;height:281.90px;background:#d5d5d5;"></div>
<div style="left:371.85px;top:252.20px;width:0.70px;height:281.90px;background:#d5d5d5;"></div>
<div style="left:401.65px;top:252.20px;width:0.70px;height:281.90px;background:#d5d5d5;"></div>
<div style="left:431.85px;top:252.20px;width:0.70px;height:281.90px;background:#d5d5d5;"></div>
<div style="left:461.65px;top:252.20px;width:0.70px;height:281.90px;background:#d5d5d5;"></div>
<div style="left:490.50px;top:91.00px;width:1.60px;height:120.90px;background:#e2e2e2;"></div>
<div style="left:490.50px;top:252.20px;width:1.60px;height:281.90px;background:#b4b4b4;"></div>
<div style="left:526.55px;top:252.20px;width:0.70px;height:281.90px;background:#d5d5d5;"></div>
<div style="left:556.65px;top:252.20px;width:0.70px;height:281.90px;background:#d5d5d5;"></div>
<div style="left:586.15px;top:252.20px;width:0.70px;height:281.90px;background:#d5d5d5;"></div>
<div style="left:616.35px;top:252.20px;width:0.70px;height:281.90px;background:#d5d5d5;"></div>
<div style="left:646.35px;top:252.20px;width:0.70px;height:281.90px;background:#d5d5d5;"></div>
<div style="left:678.85px;top:252.20px;width:0.70px;height:281.90px;background:#d5d5d5;"></div>
<div style="left:708.85px;top:252.20px;width:0.70px;height:281.90px;background:#d5d5d5;"></div>
<div style="left:731.35px;top:252.20px;width:0.70px;height:281.90px;background:#d5d5d5;"></div>
<div style="left:763.05px;top:252.20px;width:0.70px;height:281.90px;background:#d5d5d5;"></div>
<div style="left:792.40px;top:252.20px;width:1.10px;height:281.90px;background:#bcbcbc;"></div>
<div style="left:840.85px;top:252.20px;width:0.70px;height:281.90px;background:#d5d5d5;"></div>
<div style="left:888.55px;top:252.20px;width:0.70px;height:281.90px;background:#d5d5d5;"></div>
<div style="left:936.25px;top:252.20px;width:0.70px;height:281.90px;background:#d5d5d5;"></div>
<div style="left:983.75px;top:252.20px;width:0.70px;height:281.90px;background:#d5d5d5;"></div>
<span class="t k c" style="font-size:4.45px;color:#1a1a1a;line-height:5px;top:257.5px;left:1.40px;">1</span>
<span class="t k c" style="font-size:4.45px;color:#1a1a1a;line-height:5px;top:257.5px;left:13.40px;">SOR 450001103</span>
<span class="t k c" style="font-size:4.45px;color:#1a1a1a;line-height:5px;top:257.5px;left:55.70px;">X115255770</span>
<span class="t k c" style="font-size:4.45px;color:#1a1a1a;line-height:5px;top:257.5px;left:99.30px;">Reutlingen</span>
<span class="t k c" style="font-size:4.45px;color:#1a1a1a;line-height:5px;top:257.5px;left:144.25px;transform:translateX(-50%);">B</span>
<span class="t k c" style="font-size:4.45px;color:#1a1a1a;line-height:5px;top:257.5px;left:156.90px;">FlexShrink 2000 PET</span>
<div style="left:209.60px;top:257.5px;width:62.80px;height:5px;overflow:hidden;"><span class="t k c" style="font-size:4.45px;color:#1a1a1a;line-height:5px;top:0px;left:0.90px;">Cube Corrugated</span></div>
<span class="t k c" style="font-size:4.45px;color:#1a1a1a;line-height:5px;top:257.5px;left:273.30px;">Felix Gebert</span>
<span class="t k c" style="font-size:4.45px;color:#1a1a1a;line-height:5px;top:257.5px;left:327.55px;transform:translateX(-50%);">N</span>
<span class="t k c" style="font-size:4.45px;color:#1a1a1a;line-height:5px;top:257.5px;left:794.70px;">Maike Schulze</span>
<span class="t k c" style="font-size:4.45px;color:#1a1a1a;line-height:5px;top:257.5px;left:842.40px;">Sebastian Kurz</span>
<span class="t k c" style="font-size:4.45px;color:#1a1a1a;line-height:5px;top:257.5px;left:890.10px;">Susanne Neumann</span>
<span class="t k c" style="font-size:4.45px;color:#1a1a1a;line-height:5px;top:257.5px;left:937.80px;">Julian Krüger</span>
<div style="left:984.10px;top:257.5px;width:29.70px;height:5px;overflow:hidden;"><span class="t k c" style="font-size:4.45px;color:#1a1a1a;line-height:5px;top:0px;left:1.20px;">Ilona Neumann</span></div>
<span class="t k c" style="font-size:4.45px;color:#1a1a1a;line-height:5px;top:272.0px;left:1.40px;">2</span>
<span class="t k c" style="font-size:4.45px;color:#1a1a1a;line-height:5px;top:272.0px;left:13.40px;">SOR 450001109</span>
<span class="t k c" style="font-size:4.45px;color:#1a1a1a;line-height:5px;top:272.0px;left:55.70px;">X120302372</span>
<span class="t k c" style="font-size:4.45px;color:#1a1a1a;line-height:5px;top:272.0px;left:99.30px;">Reutlingen</span>
<span class="t k c" style="font-size:4.45px;color:#1a1a1a;line-height:5px;top:272.0px;left:144.25px;transform:translateX(-50%);">C</span>
<span class="t k c" style="font-size:4.45px;color:#1a1a1a;line-height:5px;top:272.0px;left:156.90px;">StretchGripper 4/6</span>
<div style="left:209.60px;top:272.0px;width:62.80px;height:5px;overflow:hidden;"><span class="t k c" style="font-size:4.45px;color:#1a1a1a;line-height:5px;top:0px;left:0.90px;">Apex Aeredale</span></div>
<span class="t k c" style="font-size:4.45px;color:#1a1a1a;line-height:5px;top:272.0px;left:273.30px;">Felix Gebert</span>
<span class="t k c" style="font-size:4.45px;color:#1a1a1a;line-height:5px;top:272.0px;left:327.55px;transform:translateX(-50%);">N</span>
<span class="t k c" style="font-size:4.45px;color:#1a1a1a;line-height:5px;top:272.0px;left:794.70px;">Gustav Wulff</span>
<span class="t k c" style="font-size:4.45px;color:#1a1a1a;line-height:5px;top:272.0px;left:842.40px;">Tobias Beck</span>
<span class="t k c" style="font-size:4.45px;color:#1a1a1a;line-height:5px;top:272.0px;left:890.10px;">Leon Mayer</span>
<span class="t k c" style="font-size:4.45px;color:#1a1a1a;line-height:5px;top:272.0px;left:937.80px;">Richard Conradi</span>
<div style="left:984.10px;top:272.0px;width:29.70px;height:5px;overflow:hidden;"><span class="t k c" style="font-size:4.45px;color:#1a1a1a;line-height:5px;top:0px;left:1.20px;">Patrick Kaiser</span></div>
<span class="t k c" style="font-size:4.45px;color:#1a1a1a;line-height:5px;top:287.0px;left:1.40px;">3</span>
<span class="t k c" style="font-size:4.45px;color:#1a1a1a;line-height:5px;top:287.0px;left:13.40px;">SOR 450001121</span>
<span class="t k c" style="font-size:4.45px;color:#1a1a1a;line-height:5px;top:287.0px;left:55.70px;">X121589191</span>
<span class="t k c" style="font-size:4.45px;color:#1a1a1a;line-height:5px;top:287.0px;left:99.30px;">Reutlingen</span>
<span class="t k c" style="font-size:4.45px;color:#1a1a1a;line-height:5px;top:287.0px;left:144.25px;transform:translateX(-50%);">A</span>
<span class="t k c" style="font-size:4.45px;color:#1a1a1a;line-height:5px;top:287.0px;left:156.90px;">FlexShrink 1500 PET</span>
<div style="left:209.60px;top:287.0px;width:62.80px;height:5px;overflow:hidden;"><span class="t k c" style="font-size:4.45px;color:#1a1a1a;line-height:5px;top:0px;left:0.90px;">Herostar Industries</span></div>
<span class="t k c" style="font-size:4.45px;color:#1a1a1a;line-height:5px;top:287.0px;left:273.30px;">Felix Gebert</span>
<span class="t k c" style="font-size:4.45px;color:#1a1a1a;line-height:5px;top:287.0px;left:327.55px;transform:translateX(-50%);">N</span>
<span class="t k c" style="font-size:4.45px;color:#1a1a1a;line-height:5px;top:287.0px;left:794.70px;">Dominik Klein</span>
<span class="t k c" style="font-size:4.45px;color:#1a1a1a;line-height:5px;top:287.0px;left:842.40px;">Tobias Beck</span>
<span class="t k c" style="font-size:4.45px;color:#1a1a1a;line-height:5px;top:287.0px;left:890.10px;">Henriette Lehmann</span>
<span class="t k c" style="font-size:4.45px;color:#1a1a1a;line-height:5px;top:287.0px;left:937.80px;">Richard Conradi</span>
<div style="left:984.10px;top:287.0px;width:29.70px;height:5px;overflow:hidden;"><span class="t k c" style="font-size:4.45px;color:#1a1a1a;line-height:5px;top:0px;left:1.20px;">Rita Schönberg</span></div>
<span class="t k c" style="font-size:4.45px;color:#1a1a1a;line-height:5px;top:301.5px;left:1.40px;">4</span>
<span class="t k c" style="font-size:4.45px;color:#1a1a1a;line-height:5px;top:301.5px;left:13.40px;">SOR 450001130</span>
<span class="t k c" style="font-size:4.45px;color:#1a1a1a;line-height:5px;top:301.5px;left:55.70px;">X127031842</span>
<span class="t k c" style="font-size:4.45px;color:#1a1a1a;line-height:5px;top:301.5px;left:99.30px;">Reutlingen</span>
<span class="t k c" style="font-size:4.45px;color:#1a1a1a;line-height:5px;top:301.5px;left:144.25px;transform:translateX(-50%);">B</span>
<span class="t k c" style="font-size:4.45px;color:#1a1a1a;line-height:5px;top:301.5px;left:156.90px;">FlexShrink 1500 PET</span>
<div style="left:209.60px;top:301.5px;width:62.80px;height:5px;overflow:hidden;"><span class="t k c" style="font-size:4.45px;color:#1a1a1a;line-height:5px;top:0px;left:0.90px;">Hatchpack</span></div>
<span class="t k c" style="font-size:4.45px;color:#1a1a1a;line-height:5px;top:301.5px;left:273.30px;">Felix Gebert</span>
<span class="t k c" style="font-size:4.45px;color:#1a1a1a;line-height:5px;top:301.5px;left:327.55px;transform:translateX(-50%);">N</span>
<span class="t k c" style="font-size:4.45px;color:#1a1a1a;line-height:5px;top:301.5px;left:794.70px;">Peter Dorner</span>
<span class="t k c" style="font-size:4.45px;color:#1a1a1a;line-height:5px;top:301.5px;left:842.40px;">Julius Hartmann</span>
<span class="t k c" style="font-size:4.45px;color:#1a1a1a;line-height:5px;top:301.5px;left:890.10px;">Leon Mayer</span>
<span class="t k c" style="font-size:4.45px;color:#1a1a1a;line-height:5px;top:301.5px;left:937.80px;">Richard Conradi</span>
<div style="left:984.10px;top:301.5px;width:29.70px;height:5px;overflow:hidden;"><span class="t k c" style="font-size:4.45px;color:#1a1a1a;line-height:5px;top:0px;left:1.20px;">Patrick Kaiser</span></div>
<span class="t k c" style="font-size:4.45px;color:#1a1a1a;line-height:5px;top:316.0px;left:1.40px;">5</span>
<span class="t k c" style="font-size:4.45px;color:#1a1a1a;line-height:5px;top:316.0px;left:13.40px;">SOR 450001134</span>
<span class="t k c" style="font-size:4.45px;color:#1a1a1a;line-height:5px;top:316.0px;left:55.70px;">X130410441</span>
<span class="t k c" style="font-size:4.45px;color:#1a1a1a;line-height:5px;top:316.0px;left:99.30px;">Reutlingen</span>
<span class="t k c" style="font-size:4.45px;color:#1a1a1a;line-height:5px;top:316.0px;left:144.25px;transform:translateX(-50%);">B</span>
<span class="t k c" style="font-size:4.45px;color:#1a1a1a;line-height:5px;top:316.0px;left:156.90px;">FlexWrap 1500</span>
<div style="left:209.60px;top:316.0px;width:62.80px;height:5px;overflow:hidden;"><span class="t k c" style="font-size:4.45px;color:#1a1a1a;line-height:5px;top:0px;left:0.90px;">Keycon Containers</span></div>
<span class="t k c" style="font-size:4.45px;color:#1a1a1a;line-height:5px;top:316.0px;left:273.30px;">Felix Gebert</span>
<span class="t k c" style="font-size:4.45px;color:#1a1a1a;line-height:5px;top:316.0px;left:327.55px;transform:translateX(-50%);">N</span>
<span class="t k c" style="font-size:4.45px;color:#1a1a1a;line-height:5px;top:316.0px;left:794.70px;">Dominik Klein</span>
<span class="t k c" style="font-size:4.45px;color:#1a1a1a;line-height:5px;top:316.0px;left:842.40px;">Henrik Köhler</span>
<span class="t k c" style="font-size:4.45px;color:#1a1a1a;line-height:5px;top:316.0px;left:890.10px;">Susanne Neumann</span>
<span class="t k c" style="font-size:4.45px;color:#1a1a1a;line-height:5px;top:316.0px;left:937.80px;">Bastian Scholz</span>
<div style="left:984.10px;top:316.0px;width:29.70px;height:5px;overflow:hidden;"><span class="t k c" style="font-size:4.45px;color:#1a1a1a;line-height:5px;top:0px;left:1.20px;">Patrick Kaiser</span></div>
<span class="t k c" style="font-size:4.45px;color:#1a1a1a;line-height:5px;top:330.5px;left:1.40px;">6</span>
<span class="t k c" style="font-size:4.45px;color:#1a1a1a;line-height:5px;top:330.5px;left:13.40px;">SOR 450001137</span>
<span class="t k c" style="font-size:4.45px;color:#1a1a1a;line-height:5px;top:330.5px;left:55.70px;">X137556996</span>
<span class="t k c" style="font-size:4.45px;color:#1a1a1a;line-height:5px;top:330.5px;left:99.30px;">Reutlingen</span>
<span class="t k c" style="font-size:4.45px;color:#1a1a1a;line-height:5px;top:330.5px;left:144.25px;transform:translateX(-50%);">C</span>
<span class="t k c" style="font-size:4.45px;color:#1a1a1a;line-height:5px;top:330.5px;left:156.90px;">Electrical automation</span>
<div style="left:209.60px;top:330.5px;width:62.80px;height:5px;overflow:hidden;"><span class="t k c" style="font-size:4.45px;color:#1a1a1a;line-height:5px;top:0px;left:0.90px;">Rootware Verpackung</span></div>
<span class="t k c" style="font-size:4.45px;color:#1a1a1a;line-height:5px;top:330.5px;left:273.30px;">Felix Gebert</span>
<span class="t k c" style="font-size:4.45px;color:#1a1a1a;line-height:5px;top:330.5px;left:327.55px;transform:translateX(-50%);">N</span>
<span class="t k c" style="font-size:4.45px;color:#1a1a1a;line-height:5px;top:330.5px;left:794.70px;">Maike Schulze</span>
<span class="t k c" style="font-size:4.45px;color:#1a1a1a;line-height:5px;top:330.5px;left:842.40px;">Nicolas Schäfer</span>
<span class="t k c" style="font-size:4.45px;color:#1a1a1a;line-height:5px;top:330.5px;left:890.10px;">Susanne Neumann</span>
<span class="t k c" style="font-size:4.45px;color:#1a1a1a;line-height:5px;top:330.5px;left:937.80px;">Bastian Scholz</span>
<div style="left:984.10px;top:330.5px;width:29.70px;height:5px;overflow:hidden;"><span class="t k c" style="font-size:4.45px;color:#1a1a1a;line-height:5px;top:0px;left:1.20px;">Rita Schönberg</span></div>
<span class="t k c" style="font-size:4.45px;color:#1a1a1a;line-height:5px;top:345.5px;left:1.40px;">7</span>
<span class="t k c" style="font-size:4.45px;color:#1a1a1a;line-height:5px;top:345.5px;left:13.40px;">SOR 450001142</span>
<span class="t k c" style="font-size:4.45px;color:#1a1a1a;line-height:5px;top:345.5px;left:55.70px;">X154863187</span>
<span class="t k c" style="font-size:4.45px;color:#1a1a1a;line-height:5px;top:345.5px;left:99.30px;">Reutlingen</span>
<span class="t k c" style="font-size:4.45px;color:#1a1a1a;line-height:5px;top:345.5px;left:144.25px;transform:translateX(-50%);">B</span>
<span class="t k c" style="font-size:4.45px;color:#1a1a1a;line-height:5px;top:345.5px;left:156.90px;">FlexWrap 2500 EU</span>
<div style="left:209.60px;top:345.5px;width:62.80px;height:5px;overflow:hidden;"><span class="t k c" style="font-size:4.45px;color:#1a1a1a;line-height:5px;top:0px;left:0.90px;">Supercan Beverages</span></div>
<span class="t k c" style="font-size:4.45px;color:#1a1a1a;line-height:5px;top:345.5px;left:273.30px;">Felix Gebert</span>
<span class="t k c" style="font-size:4.45px;color:#1a1a1a;line-height:5px;top:345.5px;left:327.55px;transform:translateX(-50%);">N</span>
<span class="t k c" style="font-size:4.45px;color:#1a1a1a;line-height:5px;top:345.5px;left:794.70px;">Thomas Schmitt</span>
<span class="t k c" style="font-size:4.45px;color:#1a1a1a;line-height:5px;top:345.5px;left:842.40px;">Anton Gruber</span>
<span class="t k c" style="font-size:4.45px;color:#1a1a1a;line-height:5px;top:345.5px;left:890.10px;">Jannik Richter</span>
<span class="t k c" style="font-size:4.45px;color:#1a1a1a;line-height:5px;top:345.5px;left:937.80px;">Philipp Schäfer</span>
<div style="left:984.10px;top:345.5px;width:29.70px;height:5px;overflow:hidden;"><span class="t k c" style="font-size:4.45px;color:#1a1a1a;line-height:5px;top:0px;left:1.20px;">Ilona Neumann</span></div>
<span class="t k c" style="font-size:4.45px;color:#1a1a1a;line-height:5px;top:360.0px;left:1.40px;">8</span>
<span class="t k c" style="font-size:4.45px;color:#1a1a1a;line-height:5px;top:360.0px;left:13.40px;">SOR 450001150</span>
<span class="t k c" style="font-size:4.45px;color:#1a1a1a;line-height:5px;top:360.0px;left:55.70px;">X157881769</span>
<span class="t k c" style="font-size:4.45px;color:#1a1a1a;line-height:5px;top:360.0px;left:99.30px;">Reutlingen</span>
<span class="t k c" style="font-size:4.45px;color:#1a1a1a;line-height:5px;top:360.0px;left:144.25px;transform:translateX(-50%);">B</span>
<span class="t k c" style="font-size:4.45px;color:#1a1a1a;line-height:5px;top:360.0px;left:156.90px;">FlexShrink 500 PET</span>
<div style="left:209.60px;top:360.0px;width:62.80px;height:5px;overflow:hidden;"><span class="t k c" style="font-size:4.45px;color:#1a1a1a;line-height:5px;top:0px;left:0.90px;">Marsbeat (India)</span></div>
<span class="t k c" style="font-size:4.45px;color:#1a1a1a;line-height:5px;top:360.0px;left:273.30px;">Felix Gebert</span>
<span class="t k c" style="font-size:4.45px;color:#1a1a1a;line-height:5px;top:360.0px;left:327.55px;transform:translateX(-50%);">N</span>
<span class="t k c" style="font-size:4.45px;color:#1a1a1a;line-height:5px;top:360.0px;left:794.70px;">Dominik Klein</span>
<span class="t k c" style="font-size:4.45px;color:#1a1a1a;line-height:5px;top:360.0px;left:842.40px;">Nicolas Schäfer</span>
<span class="t k c" style="font-size:4.45px;color:#1a1a1a;line-height:5px;top:360.0px;left:890.10px;">Leon Mayer</span>
<span class="t k c" style="font-size:4.45px;color:#1a1a1a;line-height:5px;top:360.0px;left:937.80px;">Julian Krüger</span>
<div style="left:984.10px;top:360.0px;width:29.70px;height:5px;overflow:hidden;"><span class="t k c" style="font-size:4.45px;color:#1a1a1a;line-height:5px;top:0px;left:1.20px;">Janis Hoffmann</span></div>
<span class="t k c" style="font-size:4.45px;color:#1a1a1a;line-height:5px;top:374.5px;left:1.40px;">9</span>
<span class="t k c" style="font-size:4.45px;color:#1a1a1a;line-height:5px;top:374.5px;left:13.40px;">SOR 450001168</span>
<span class="t k c" style="font-size:4.45px;color:#1a1a1a;line-height:5px;top:374.5px;left:55.70px;">X185705485</span>
<span class="t k c" style="font-size:4.45px;color:#1a1a1a;line-height:5px;top:374.5px;left:99.30px;">Reutlingen</span>
<span class="t k c" style="font-size:4.45px;color:#1a1a1a;line-height:5px;top:374.5px;left:144.25px;transform:translateX(-50%);">B</span>
<span class="t k c" style="font-size:4.45px;color:#1a1a1a;line-height:5px;top:374.5px;left:156.90px;">FlexShrink 1000 PET</span>
<div style="left:209.60px;top:374.5px;width:62.80px;height:5px;overflow:hidden;"><span class="t k c" style="font-size:4.45px;color:#1a1a1a;line-height:5px;top:0px;left:0.90px;">Robofarm</span></div>
<span class="t k c" style="font-size:4.45px;color:#1a1a1a;line-height:5px;top:374.5px;left:273.30px;">Felix Gebert</span>
<span class="t k c" style="font-size:4.45px;color:#1a1a1a;line-height:5px;top:374.5px;left:327.55px;transform:translateX(-50%);">N</span>
<span class="t k c" style="font-size:4.45px;color:#1a1a1a;line-height:5px;top:374.5px;left:794.70px;">Peter Dorner</span>
<span class="t k c" style="font-size:4.45px;color:#1a1a1a;line-height:5px;top:374.5px;left:842.40px;">Sebastian Kurz</span>
<span class="t k c" style="font-size:4.45px;color:#1a1a1a;line-height:5px;top:374.5px;left:890.10px;">Niklas Peters</span>
<span class="t k c" style="font-size:4.45px;color:#1a1a1a;line-height:5px;top:374.5px;left:937.80px;">Lina Klein</span>
<div style="left:984.10px;top:374.5px;width:29.70px;height:5px;overflow:hidden;"><span class="t k c" style="font-size:4.45px;color:#1a1a1a;line-height:5px;top:0px;left:1.20px;">Patrick Kaiser</span></div>
<span class="t k c" style="font-size:4.45px;color:#1a1a1a;line-height:5px;top:389.5px;left:1.40px;">10</span>
<span class="t k c" style="font-size:4.45px;color:#1a1a1a;line-height:5px;top:389.5px;left:13.40px;">SOR 450001173</span>
<span class="t k c" style="font-size:4.45px;color:#1a1a1a;line-height:5px;top:389.5px;left:55.70px;">X187207460</span>
<span class="t k c" style="font-size:4.45px;color:#1a1a1a;line-height:5px;top:389.5px;left:99.30px;">Reutlingen</span>
<span class="t k c" style="font-size:4.45px;color:#1a1a1a;line-height:5px;top:389.5px;left:144.25px;transform:translateX(-50%);">A</span>
<span class="t k c" style="font-size:4.45px;color:#1a1a1a;line-height:5px;top:389.5px;left:156.90px;">FlexShrink 2000 PET</span>
<div style="left:209.60px;top:389.5px;width:62.80px;height:5px;overflow:hidden;"><span class="t k c" style="font-size:4.45px;color:#1a1a1a;line-height:5px;top:0px;left:0.90px;">Mabi Dachtechnik</span></div>
<span class="t k c" style="font-size:4.45px;color:#1a1a1a;line-height:5px;top:389.5px;left:273.30px;">Felix Gebert</span>
<span class="t k c" style="font-size:4.45px;color:#1a1a1a;line-height:5px;top:389.5px;left:327.55px;transform:translateX(-50%);">N</span>
<span class="t k c" style="font-size:4.45px;color:#1a1a1a;line-height:5px;top:389.5px;left:794.70px;">Gustav Wulff</span>
<span class="t k c" style="font-size:4.45px;color:#1a1a1a;line-height:5px;top:389.5px;left:842.40px;">Julius Hartmann</span>
<span class="t k c" style="font-size:4.45px;color:#1a1a1a;line-height:5px;top:389.5px;left:890.10px;">Leon Mayer</span>
<span class="t k c" style="font-size:4.45px;color:#1a1a1a;line-height:5px;top:389.5px;left:937.80px;">Richard Conradi</span>
<div style="left:984.10px;top:389.5px;width:29.70px;height:5px;overflow:hidden;"><span class="t k c" style="font-size:4.45px;color:#1a1a1a;line-height:5px;top:0px;left:1.20px;">Liselotte Kaiser</span></div>
<span class="t k c" style="font-size:4.45px;color:#1a1a1a;line-height:5px;top:404.0px;left:1.40px;">11</span>
<span class="t k c" style="font-size:4.45px;color:#1a1a1a;line-height:5px;top:404.0px;left:13.40px;">SOR 450001192</span>
<span class="t k c" style="font-size:4.45px;color:#1a1a1a;line-height:5px;top:404.0px;left:55.70px;">X206942024</span>
<span class="t k c" style="font-size:4.45px;color:#1a1a1a;line-height:5px;top:404.0px;left:99.30px;">Reutlingen</span>
<span class="t k c" style="font-size:4.45px;color:#1a1a1a;line-height:5px;top:404.0px;left:144.25px;transform:translateX(-50%);">B</span>
<span class="t k c" style="font-size:4.45px;color:#1a1a1a;line-height:5px;top:404.0px;left:156.90px;">PalletMaster Vario</span>
<div style="left:209.60px;top:404.0px;width:62.80px;height:5px;overflow:hidden;"><span class="t k c" style="font-size:4.45px;color:#1a1a1a;line-height:5px;top:0px;left:0.90px;">Druckzentrum Nord</span></div>
<span class="t k c" style="font-size:4.45px;color:#1a1a1a;line-height:5px;top:404.0px;left:273.30px;">Felix Gebert</span>
<span class="t k c" style="font-size:4.45px;color:#1a1a1a;line-height:5px;top:404.0px;left:327.55px;transform:translateX(-50%);">N</span>
<span class="t k c" style="font-size:4.45px;color:#1a1a1a;line-height:5px;top:404.0px;left:794.70px;">Gustav Wulff</span>
<span class="t k c" style="font-size:4.45px;color:#1a1a1a;line-height:5px;top:404.0px;left:842.40px;">Sebastian Kurz</span>
<span class="t k c" style="font-size:4.45px;color:#1a1a1a;line-height:5px;top:404.0px;left:890.10px;">Henriette Lehmann</span>
<span class="t k c" style="font-size:4.45px;color:#1a1a1a;line-height:5px;top:404.0px;left:937.80px;">Richard Conradi</span>
<div style="left:984.10px;top:404.0px;width:29.70px;height:5px;overflow:hidden;"><span class="t k c" style="font-size:4.45px;color:#1a1a1a;line-height:5px;top:0px;left:1.20px;">Rita Schönberg</span></div>
<span class="t k c" style="font-size:4.45px;color:#1a1a1a;line-height:5px;top:418.5px;left:1.40px;">12</span>
<span class="t k c" style="font-size:4.45px;color:#1a1a1a;line-height:5px;top:418.5px;left:13.40px;">SOR 450001208</span>
<span class="t k c" style="font-size:4.45px;color:#1a1a1a;line-height:5px;top:418.5px;left:55.70px;">X233400379</span>
<span class="t k c" style="font-size:4.45px;color:#1a1a1a;line-height:5px;top:418.5px;left:99.30px;">Reutlingen</span>
<span class="t k c" style="font-size:4.45px;color:#1a1a1a;line-height:5px;top:418.5px;left:144.25px;transform:translateX(-50%);">C</span>
<span class="t k c" style="font-size:4.45px;color:#1a1a1a;line-height:5px;top:418.5px;left:156.90px;">StretchGripper 4/6</span>
<div style="left:209.60px;top:418.5px;width:62.80px;height:5px;overflow:hidden;"><span class="t k c" style="font-size:4.45px;color:#1a1a1a;line-height:5px;top:0px;left:0.90px;">HH Airheight Systems</span></div>
<span class="t k c" style="font-size:4.45px;color:#1a1a1a;line-height:5px;top:418.5px;left:273.30px;">Felix Gebert</span>
<span class="t k c" style="font-size:4.45px;color:#1a1a1a;line-height:5px;top:418.5px;left:327.55px;transform:translateX(-50%);">N</span>
<span class="t k c" style="font-size:4.45px;color:#1a1a1a;line-height:5px;top:418.5px;left:794.70px;">Dominik Klein</span>
<span class="t k c" style="font-size:4.45px;color:#1a1a1a;line-height:5px;top:418.5px;left:842.40px;">Henrik Köhler</span>
<span class="t k c" style="font-size:4.45px;color:#1a1a1a;line-height:5px;top:418.5px;left:890.10px;">Thomas Wolf</span>
<span class="t k c" style="font-size:4.45px;color:#1a1a1a;line-height:5px;top:418.5px;left:937.80px;">Richard Conradi</span>
<div style="left:984.10px;top:418.5px;width:29.70px;height:5px;overflow:hidden;"><span class="t k c" style="font-size:4.45px;color:#1a1a1a;line-height:5px;top:0px;left:1.20px;">Rita Schönberg</span></div>
<span class="t k c" style="font-size:4.45px;color:#1a1a1a;line-height:5px;top:433.5px;left:1.40px;">13</span>
<span class="t k c" style="font-size:4.45px;color:#1a1a1a;line-height:5px;top:433.5px;left:13.40px;">SOR 450001214</span>
<span class="t k c" style="font-size:4.45px;color:#1a1a1a;line-height:5px;top:433.5px;left:55.70px;">X239348200</span>
<span class="t k c" style="font-size:4.45px;color:#1a1a1a;line-height:5px;top:433.5px;left:99.30px;">Reutlingen</span>
<span class="t k c" style="font-size:4.45px;color:#1a1a1a;line-height:5px;top:433.5px;left:144.25px;transform:translateX(-50%);">C</span>
<span class="t k c" style="font-size:4.45px;color:#1a1a1a;line-height:5px;top:433.5px;left:156.90px;">FlexWrap 2500 EU</span>
<div style="left:209.60px;top:433.5px;width:62.80px;height:5px;overflow:hidden;"><span class="t k c" style="font-size:4.45px;color:#1a1a1a;line-height:5px;top:0px;left:0.90px;">Altro Pack</span></div>
<span class="t k c" style="font-size:4.45px;color:#1a1a1a;line-height:5px;top:433.5px;left:273.30px;">Felix Gebert</span>
<span class="t k c" style="font-size:4.45px;color:#1a1a1a;line-height:5px;top:433.5px;left:327.55px;transform:translateX(-50%);">N</span>
<span class="t k c" style="font-size:4.45px;color:#1a1a1a;line-height:5px;top:433.5px;left:794.70px;">Moritz Staudinger</span>
<span class="t k c" style="font-size:4.45px;color:#1a1a1a;line-height:5px;top:433.5px;left:842.40px;">Anton Gruber</span>
<span class="t k c" style="font-size:4.45px;color:#1a1a1a;line-height:5px;top:433.5px;left:890.10px;">Jannik Richter</span>
<span class="t k c" style="font-size:4.45px;color:#1a1a1a;line-height:5px;top:433.5px;left:937.80px;">Richard Conradi</span>
<div style="left:984.10px;top:433.5px;width:29.70px;height:5px;overflow:hidden;"><span class="t k c" style="font-size:4.45px;color:#1a1a1a;line-height:5px;top:0px;left:1.20px;">Ilona Neumann</span></div>
<span class="t k c" style="font-size:4.45px;color:#1a1a1a;line-height:5px;top:448.0px;left:1.40px;">14</span>
<span class="t k c" style="font-size:4.45px;color:#1a1a1a;line-height:5px;top:448.0px;left:13.40px;">SOR 450001217</span>
<span class="t k c" style="font-size:4.45px;color:#1a1a1a;line-height:5px;top:448.0px;left:55.70px;">X242319788</span>
<span class="t k c" style="font-size:4.45px;color:#1a1a1a;line-height:5px;top:448.0px;left:99.30px;">Reutlingen</span>
<span class="t k c" style="font-size:4.45px;color:#1a1a1a;line-height:5px;top:448.0px;left:144.25px;transform:translateX(-50%);">B</span>
<span class="t k c" style="font-size:4.45px;color:#1a1a1a;line-height:5px;top:448.0px;left:156.90px;">FlexShrink 1000 PET</span>
<div style="left:209.60px;top:448.0px;width:62.80px;height:5px;overflow:hidden;"><span class="t k c" style="font-size:4.45px;color:#1a1a1a;line-height:5px;top:0px;left:0.90px;">Cellografica Gerosa</span></div>
<span class="t k c" style="font-size:4.45px;color:#1a1a1a;line-height:5px;top:448.0px;left:273.30px;">Felix Gebert</span>
<span class="t k c" style="font-size:4.45px;color:#1a1a1a;line-height:5px;top:448.0px;left:327.55px;transform:translateX(-50%);">N</span>
<span class="t k c" style="font-size:4.45px;color:#1a1a1a;line-height:5px;top:448.0px;left:794.70px;">Moritz Staudinger</span>
<span class="t k c" style="font-size:4.45px;color:#1a1a1a;line-height:5px;top:448.0px;left:842.40px;">Nicolas Schäfer</span>
<span class="t k c" style="font-size:4.45px;color:#1a1a1a;line-height:5px;top:448.0px;left:890.10px;">Thomas Wolf</span>
<span class="t k c" style="font-size:4.45px;color:#1a1a1a;line-height:5px;top:448.0px;left:937.80px;">Bastian Scholz</span>
<div style="left:984.10px;top:448.0px;width:29.70px;height:5px;overflow:hidden;"><span class="t k c" style="font-size:4.45px;color:#1a1a1a;line-height:5px;top:0px;left:1.20px;">Ilona Neumann</span></div>
<span class="t k c" style="font-size:4.45px;color:#1a1a1a;line-height:5px;top:462.5px;left:1.40px;">15</span>
<span class="t k c" style="font-size:4.45px;color:#1a1a1a;line-height:5px;top:462.5px;left:13.40px;">SOR 450001223</span>
<span class="t k c" style="font-size:4.45px;color:#1a1a1a;line-height:5px;top:462.5px;left:55.70px;">X250698862</span>
<span class="t k c" style="font-size:4.45px;color:#1a1a1a;line-height:5px;top:462.5px;left:99.30px;">Reutlingen</span>
<span class="t k c" style="font-size:4.45px;color:#1a1a1a;line-height:5px;top:462.5px;left:144.25px;transform:translateX(-50%);">C</span>
<span class="t k c" style="font-size:4.45px;color:#1a1a1a;line-height:5px;top:462.5px;left:156.90px;">FlexWrap 2500 EU</span>
<div style="left:209.60px;top:462.5px;width:62.80px;height:5px;overflow:hidden;"><span class="t k c" style="font-size:4.45px;color:#1a1a1a;line-height:5px;top:0px;left:0.90px;">S.S. Whitehall - Birmingham 1</span></div>
<span class="t k c" style="font-size:4.45px;color:#1a1a1a;line-height:5px;top:462.5px;left:273.30px;">Felix Gebert</span>
<span class="t k c" style="font-size:4.45px;color:#1a1a1a;line-height:5px;top:462.5px;left:327.55px;transform:translateX(-50%);">N</span>
<span class="t k c" style="font-size:4.45px;color:#1a1a1a;line-height:5px;top:462.5px;left:371.10px;transform:translateX(-100%);">31-Dec-18</span>
<span class="t k c" style="font-size:4.45px;color:#1a1a1a;line-height:5px;top:462.5px;left:400.90px;transform:translateX(-100%);">7-Apr-19</span>
<span class="t k c" style="font-size:4.45px;color:#1a1a1a;line-height:5px;top:462.5px;left:431.10px;transform:translateX(-100%);">13-Apr-19</span>
<span class="t k c" style="font-size:4.45px;color:#1a1a1a;line-height:5px;top:462.5px;left:460.90px;transform:translateX(-100%);">12-Apr-19</span>
<span class="t k c" style="font-size:4.45px;color:#1a1a1a;line-height:5px;top:462.5px;left:490.50px;transform:translateX(-100%);">21-Apr-19</span>
<span class="t k c" style="font-size:4.45px;color:#1a1a1a;line-height:5px;top:462.5px;left:525.80px;transform:translateX(-100%);">68.903 €</span>
<span class="t k c" style="font-size:4.45px;color:#1a1a1a;line-height:5px;top:462.5px;left:555.90px;transform:translateX(-100%);">30%</span>
<span class="t k c" style="font-size:4.45px;color:#1a1a1a;line-height:5px;top:462.5px;left:585.40px;transform:translateX(-100%);">14-Jan-19</span>
<span class="t k c" style="font-size:4.45px;color:#1a1a1a;line-height:5px;top:462.5px;left:615.60px;transform:translateX(-100%);">48%</span>
<span class="t k c" style="font-size:4.45px;color:#1a1a1a;line-height:5px;top:462.5px;left:645.60px;transform:translateX(-100%);">7-Apr-19</span>
<span class="t k c" style="font-size:4.45px;color:#1a1a1a;line-height:5px;top:462.5px;left:678.10px;transform:translateX(-100%);">10%</span>
<span class="t k c" style="font-size:4.45px;color:#1a1a1a;line-height:5px;top:462.5px;left:708.10px;transform:translateX(-100%);">12-Apr-19</span>
<span class="t k c" style="font-size:4.45px;color:#1a1a1a;line-height:5px;top:462.5px;left:730.60px;transform:translateX(-100%);">20%</span>
<span class="t k c" style="font-size:4.45px;color:#1a1a1a;line-height:5px;top:462.5px;left:762.30px;transform:translateX(-100%);">55.123 €</span>
<span class="t k c" style="font-size:4.45px;color:#1a1a1a;line-height:5px;top:462.5px;left:792.40px;transform:translateX(-100%);">144.697 €</span>
<span class="t k c" style="font-size:4.45px;color:#1a1a1a;line-height:5px;top:462.5px;left:794.70px;">Peter Dorner</span>
<span class="t k c" style="font-size:4.45px;color:#1a1a1a;line-height:5px;top:462.5px;left:842.40px;">Julius Hartmann</span>
<span class="t k c" style="font-size:4.45px;color:#1a1a1a;line-height:5px;top:462.5px;left:890.10px;">Thomas Wolf</span>
<span class="t k c" style="font-size:4.45px;color:#1a1a1a;line-height:5px;top:462.5px;left:937.80px;">Philipp Schäfer</span>
<div style="left:984.10px;top:462.5px;width:29.70px;height:5px;overflow:hidden;"><span class="t k c" style="font-size:4.45px;color:#1a1a1a;line-height:5px;top:0px;left:1.20px;">Werner Leimbach</span></div>
<span class="t k c" style="font-size:4.45px;color:#1a1a1a;line-height:5px;top:477.5px;left:1.40px;">16</span>
<span class="t k c" style="font-size:4.45px;color:#1a1a1a;line-height:5px;top:477.5px;left:13.40px;">SOR 450001237</span>
<span class="t k c" style="font-size:4.45px;color:#1a1a1a;line-height:5px;top:477.5px;left:55.70px;">X264446633</span>
<span class="t k c" style="font-size:4.45px;color:#1a1a1a;line-height:5px;top:477.5px;left:99.30px;">Reutlingen</span>
<span class="t k c" style="font-size:4.45px;color:#1a1a1a;line-height:5px;top:477.5px;left:144.25px;transform:translateX(-50%);">C</span>
<span class="t k c" style="font-size:4.45px;color:#1a1a1a;line-height:5px;top:477.5px;left:156.90px;">FlexWrap 2000</span>
<div style="left:209.60px;top:477.5px;width:62.80px;height:5px;overflow:hidden;"><span class="t k c" style="font-size:4.45px;color:#1a1a1a;line-height:5px;top:0px;left:0.90px;">Boland Fastpac - Pj. Extension Lodz</span></div>
<span class="t k c" style="font-size:4.45px;color:#1a1a1a;line-height:5px;top:477.5px;left:273.30px;">Felix Gebert</span>
<span class="t k c" style="font-size:4.45px;color:#1a1a1a;line-height:5px;top:477.5px;left:327.55px;transform:translateX(-50%);">N</span>
<span class="t k c" style="font-size:4.45px;color:#1a1a1a;line-height:5px;top:477.5px;left:371.10px;transform:translateX(-100%);">26-Jan-19</span>
<span class="t k c" style="font-size:4.45px;color:#1a1a1a;line-height:5px;top:477.5px;left:400.90px;transform:translateX(-100%);">22-Apr-19</span>
<span class="t k c" style="font-size:4.45px;color:#1a1a1a;line-height:5px;top:477.5px;left:431.10px;transform:translateX(-100%);">3-May-19</span>
<span class="t k c" style="font-size:4.45px;color:#1a1a1a;line-height:5px;top:477.5px;left:460.90px;transform:translateX(-100%);">16-Jul-19</span>
<span class="t k c" style="font-size:4.45px;color:#1a1a1a;line-height:5px;top:477.5px;left:490.50px;transform:translateX(-100%);">4-Aug-19</span>
<span class="t k c" style="font-size:4.45px;color:#1a1a1a;line-height:5px;top:477.5px;left:525.80px;transform:translateX(-100%);">57.778 €</span>
<span class="t k c" style="font-size:4.45px;color:#1a1a1a;line-height:5px;top:477.5px;left:555.90px;transform:translateX(-100%);">35%</span>
<span class="t k c" style="font-size:4.45px;color:#1a1a1a;line-height:5px;top:477.5px;left:585.40px;transform:translateX(-100%);">6-Feb-19</span>
<span class="t k c" style="font-size:4.45px;color:#1a1a1a;line-height:5px;top:477.5px;left:615.60px;transform:translateX(-100%);">65%</span>
<span class="t k c" style="font-size:4.45px;color:#1a1a1a;line-height:5px;top:477.5px;left:645.60px;transform:translateX(-100%);">22-Apr-19</span>
<span class="t k c" style="font-size:4.45px;color:#1a1a1a;line-height:5px;top:477.5px;left:678.10px;transform:translateX(-100%);">0%</span>
<span class="t k c" style="font-size:4.45px;color:#1a1a1a;line-height:5px;top:477.5px;left:708.10px;transform:translateX(-100%);">10-Jul-19</span>
<span class="t k c" style="font-size:4.45px;color:#1a1a1a;line-height:5px;top:477.5px;left:730.60px;transform:translateX(-100%);">20%</span>
<span class="t k c" style="font-size:4.45px;color:#1a1a1a;line-height:5px;top:477.5px;left:762.30px;transform:translateX(-100%);">57.778 €</span>
<span class="t k c" style="font-size:4.45px;color:#1a1a1a;line-height:5px;top:477.5px;left:792.40px;transform:translateX(-100%);">115.555 €</span>
<span class="t k c" style="font-size:4.45px;color:#1a1a1a;line-height:5px;top:477.5px;left:794.70px;">Moritz Staudinger</span>
<span class="t k c" style="font-size:4.45px;color:#1a1a1a;line-height:5px;top:477.5px;left:842.40px;">Julius Hartmann</span>
<span class="t k c" style="font-size:4.45px;color:#1a1a1a;line-height:5px;top:477.5px;left:890.10px;">Susanne Neumann</span>
<span class="t k c" style="font-size:4.45px;color:#1a1a1a;line-height:5px;top:477.5px;left:937.80px;">Lina Klein</span>
<div style="left:984.10px;top:477.5px;width:29.70px;height:5px;overflow:hidden;"><span class="t k c" style="font-size:4.45px;color:#1a1a1a;line-height:5px;top:0px;left:1.20px;">Liselotte Kaiser</span></div>
<span class="t k c" style="font-size:4.45px;color:#1a1a1a;line-height:5px;top:492.0px;left:1.40px;">17</span>
<span class="t k c" style="font-size:4.45px;color:#1a1a1a;line-height:5px;top:492.0px;left:13.40px;">SOR 450001246</span>
<span class="t k c" style="font-size:4.45px;color:#1a1a1a;line-height:5px;top:492.0px;left:55.70px;">X273859791</span>
<span class="t k c" style="font-size:4.45px;color:#1a1a1a;line-height:5px;top:492.0px;left:99.30px;">Reutlingen</span>
<span class="t k c" style="font-size:4.45px;color:#1a1a1a;line-height:5px;top:492.0px;left:144.25px;transform:translateX(-50%);">B</span>
<span class="t k c" style="font-size:4.45px;color:#1a1a1a;line-height:5px;top:492.0px;left:156.90px;">FlexWrap 1500</span>
<div style="left:209.60px;top:492.0px;width:62.80px;height:5px;overflow:hidden;"><span class="t k c" style="font-size:4.45px;color:#1a1a1a;line-height:5px;top:0px;left:0.90px;">Stirling POL - Pj. Lodz Logistore 2</span></div>
<span class="t k c" style="font-size:4.45px;color:#1a1a1a;line-height:5px;top:492.0px;left:273.30px;">Sebastian Kurz</span>
<span class="t k c" style="font-size:4.45px;color:#1a1a1a;line-height:5px;top:492.0px;left:327.55px;transform:translateX(-50%);">N</span>
<span class="t k c" style="font-size:4.45px;color:#1a1a1a;line-height:5px;top:492.0px;left:371.10px;transform:translateX(-100%);">13-Feb-19</span>
<span class="t k c" style="font-size:4.45px;color:#1a1a1a;line-height:5px;top:492.0px;left:400.90px;transform:translateX(-100%);">12-May-19</span>
<span class="t k c" style="font-size:4.45px;color:#1a1a1a;line-height:5px;top:492.0px;left:431.10px;transform:translateX(-100%);">12-May-19</span>
<span class="t k c" style="font-size:4.45px;color:#1a1a1a;line-height:5px;top:492.0px;left:460.90px;transform:translateX(-100%);">25-Jul-19</span>
<span class="t k c" style="font-size:4.45px;color:#1a1a1a;line-height:5px;top:492.0px;left:490.50px;transform:translateX(-100%);">6-Aug-19</span>
<span class="t k c" style="font-size:4.45px;color:#1a1a1a;line-height:5px;top:492.0px;left:525.80px;transform:translateX(-100%);">164.756 €</span>
<span class="t k c" style="font-size:4.45px;color:#1a1a1a;line-height:5px;top:492.0px;left:555.90px;transform:translateX(-100%);">31%</span>
<span class="t k c" style="font-size:4.45px;color:#1a1a1a;line-height:5px;top:492.0px;left:585.40px;transform:translateX(-100%);">26-Feb-19</span>
<span class="t k c" style="font-size:4.45px;color:#1a1a1a;line-height:5px;top:492.0px;left:615.60px;transform:translateX(-100%);">69%</span>
<span class="t k c" style="font-size:4.45px;color:#1a1a1a;line-height:5px;top:492.0px;left:645.60px;transform:translateX(-100%);">3-May-19</span>
<span class="t k c" style="font-size:4.45px;color:#1a1a1a;line-height:5px;top:492.0px;left:678.10px;transform:translateX(-100%);">0%</span>
<span class="t k c" style="font-size:4.45px;color:#1a1a1a;line-height:5px;top:492.0px;left:708.10px;transform:translateX(-100%);">25-Jul-19</span>
<span class="t k c" style="font-size:4.45px;color:#1a1a1a;line-height:5px;top:492.0px;left:730.60px;transform:translateX(-100%);">20%</span>
<span class="t k c" style="font-size:4.45px;color:#1a1a1a;line-height:5px;top:492.0px;left:762.30px;transform:translateX(-100%);">164.756 €</span>
<span class="t k c" style="font-size:4.45px;color:#1a1a1a;line-height:5px;top:492.0px;left:792.40px;transform:translateX(-100%);">329.512 €</span>
<span class="t k c" style="font-size:4.45px;color:#1a1a1a;line-height:5px;top:492.0px;left:794.70px;">Moritz Staudinger</span>
<span class="t k c" style="font-size:4.45px;color:#1a1a1a;line-height:5px;top:492.0px;left:842.40px;">Sebastian Kurz</span>
<span class="t k c" style="font-size:4.45px;color:#1a1a1a;line-height:5px;top:492.0px;left:890.10px;">Henriette Lehmann</span>
<span class="t k c" style="font-size:4.45px;color:#1a1a1a;line-height:5px;top:492.0px;left:937.80px;">Philipp Schäfer</span>
<div style="left:984.10px;top:492.0px;width:29.70px;height:5px;overflow:hidden;"><span class="t k c" style="font-size:4.45px;color:#1a1a1a;line-height:5px;top:0px;left:1.20px;">Ilona Neumann</span></div>
<span class="t k c" style="font-size:4.45px;color:#1a1a1a;line-height:5px;top:506.5px;left:1.40px;">18</span>
<span class="t k c" style="font-size:4.45px;color:#1a1a1a;line-height:5px;top:506.5px;left:13.40px;">SOR 450001250</span>
<span class="t k c" style="font-size:4.45px;color:#1a1a1a;line-height:5px;top:506.5px;left:55.70px;">X277268198</span>
<span class="t k c" style="font-size:4.45px;color:#1a1a1a;line-height:5px;top:506.5px;left:99.30px;">Reutlingen</span>
<span class="t k c" style="font-size:4.45px;color:#1a1a1a;line-height:5px;top:506.5px;left:144.25px;transform:translateX(-50%);">C</span>
<span class="t k c" style="font-size:4.45px;color:#1a1a1a;line-height:5px;top:506.5px;left:156.90px;">FlexWrap 2500 US</span>
<div style="left:209.60px;top:506.5px;width:62.80px;height:5px;overflow:hidden;"><span class="t k c" style="font-size:4.45px;color:#1a1a1a;line-height:5px;top:0px;left:0.90px;">Maxhofen Pharmaceutical Austria</span></div>
<span class="t k c" style="font-size:4.45px;color:#1a1a1a;line-height:5px;top:506.5px;left:273.30px;">Sebastian Kurz</span>
<span class="t k c" style="font-size:4.45px;color:#1a1a1a;line-height:5px;top:506.5px;left:327.55px;transform:translateX(-50%);">N</span>
<span class="t k c" style="font-size:4.45px;color:#1a1a1a;line-height:5px;top:506.5px;left:371.10px;transform:translateX(-100%);">19-Feb-19</span>
<span class="t k c" style="font-size:4.45px;color:#1a1a1a;line-height:5px;top:506.5px;left:400.90px;transform:translateX(-100%);">13-Apr-19</span>
<span class="t k c" style="font-size:4.45px;color:#1a1a1a;line-height:5px;top:506.5px;left:431.10px;transform:translateX(-100%);">20-Apr-19</span>
<span class="t k c" style="font-size:4.45px;color:#1a1a1a;line-height:5px;top:506.5px;left:460.90px;transform:translateX(-100%);">5-Jun-19</span>
<span class="t k c" style="font-size:4.45px;color:#1a1a1a;line-height:5px;top:506.5px;left:490.50px;transform:translateX(-100%);">15-Jun-19</span>
<span class="t k c" style="font-size:4.45px;color:#1a1a1a;line-height:5px;top:506.5px;left:525.80px;transform:translateX(-100%);">54.172 €</span>
<span class="t k c" style="font-size:4.45px;color:#1a1a1a;line-height:5px;top:506.5px;left:555.90px;transform:translateX(-100%);">50%</span>
<span class="t k c" style="font-size:4.45px;color:#1a1a1a;line-height:5px;top:506.5px;left:585.40px;transform:translateX(-100%);">24-Feb-19</span>
<span class="t k c" style="font-size:4.45px;color:#1a1a1a;line-height:5px;top:506.5px;left:615.60px;transform:translateX(-100%);">50%</span>
<span class="t k c" style="font-size:4.45px;color:#1a1a1a;line-height:5px;top:506.5px;left:645.60px;transform:translateX(-100%);">13-Apr-19</span>
<span class="t k c" style="font-size:4.45px;color:#1a1a1a;line-height:5px;top:506.5px;left:678.10px;transform:translateX(-100%);">0%</span>
<span class="t k c" style="font-size:4.45px;color:#1a1a1a;line-height:5px;top:506.5px;left:708.10px;transform:translateX(-100%);">5-Jun-19</span>
<span class="t k c" style="font-size:4.45px;color:#1a1a1a;line-height:5px;top:506.5px;left:730.60px;transform:translateX(-100%);">20%</span>
<span class="t k c" style="font-size:4.45px;color:#1a1a1a;line-height:5px;top:506.5px;left:762.30px;transform:translateX(-100%);">54.172 €</span>
<span class="t k c" style="font-size:4.45px;color:#1a1a1a;line-height:5px;top:506.5px;left:792.40px;transform:translateX(-100%);">108.344 €</span>
<span class="t k c" style="font-size:4.45px;color:#1a1a1a;line-height:5px;top:506.5px;left:794.70px;">Moritz Staudinger</span>
<span class="t k c" style="font-size:4.45px;color:#1a1a1a;line-height:5px;top:506.5px;left:842.40px;">Julius Hartmann</span>
<span class="t k c" style="font-size:4.45px;color:#1a1a1a;line-height:5px;top:506.5px;left:890.10px;">Jannik Richter</span>
<span class="t k c" style="font-size:4.45px;color:#1a1a1a;line-height:5px;top:506.5px;left:937.80px;">Philipp Schäfer</span>
<div style="left:984.10px;top:506.5px;width:29.70px;height:5px;overflow:hidden;"><span class="t k c" style="font-size:4.45px;color:#1a1a1a;line-height:5px;top:0px;left:1.20px;">Ilona Neumann</span></div>
<span class="t k c" style="font-size:4.45px;color:#1a1a1a;line-height:5px;top:521.5px;left:1.40px;">19</span>
<span class="t k c" style="font-size:4.45px;color:#1a1a1a;line-height:5px;top:521.5px;left:13.40px;">SOR 450001260</span>
<span class="t k c" style="font-size:4.45px;color:#1a1a1a;line-height:5px;top:521.5px;left:55.70px;">X281140205</span>
<span class="t k c" style="font-size:4.45px;color:#1a1a1a;line-height:5px;top:521.5px;left:99.30px;">Reutlingen</span>
<span class="t k c" style="font-size:4.45px;color:#1a1a1a;line-height:5px;top:521.5px;left:144.25px;transform:translateX(-50%);">B</span>
<span class="t k c" style="font-size:4.45px;color:#1a1a1a;line-height:5px;top:521.5px;left:156.90px;">FlexShrink 2500 PET</span>
<div style="left:209.60px;top:521.5px;width:62.80px;height:5px;overflow:hidden;"><span class="t k c" style="font-size:4.45px;color:#1a1a1a;line-height:5px;top:0px;left:0.90px;">Westpark Corrugated - Pj. Boston</span></div>
<span class="t k c" style="font-size:4.45px;color:#1a1a1a;line-height:5px;top:521.5px;left:273.30px;">Felix Gebert</span>
<span class="t k c" style="font-size:4.45px;color:#1a1a1a;line-height:5px;top:521.5px;left:327.55px;transform:translateX(-50%);">N</span>
<span class="t k c" style="font-size:4.45px;color:#1a1a1a;line-height:5px;top:521.5px;left:371.10px;transform:translateX(-100%);">2-Mar-19</span>
<span class="t k c" style="font-size:4.45px;color:#1a1a1a;line-height:5px;top:521.5px;left:400.90px;transform:translateX(-100%);">3-May-19</span>
<span class="t k c" style="font-size:4.45px;color:#1a1a1a;line-height:5px;top:521.5px;left:431.10px;transform:translateX(-100%);">14-May-19</span>
<span class="t k c" style="font-size:4.45px;color:#1a1a1a;line-height:5px;top:521.5px;left:460.90px;transform:translateX(-100%);">11-Jul-19</span>
<span class="t k c" style="font-size:4.45px;color:#1a1a1a;line-height:5px;top:521.5px;left:490.50px;transform:translateX(-100%);">22-Jul-19</span>
<span class="t k c" style="font-size:4.45px;color:#1a1a1a;line-height:5px;top:521.5px;left:525.80px;transform:translateX(-100%);">161.710 €</span>
<span class="t k c" style="font-size:4.45px;color:#1a1a1a;line-height:5px;top:521.5px;left:555.90px;transform:translateX(-100%);">40%</span>
<span class="t k c" style="font-size:4.45px;color:#1a1a1a;line-height:5px;top:521.5px;left:585.40px;transform:translateX(-100%);">19-Feb-19</span>
<span class="t k c" style="font-size:4.45px;color:#1a1a1a;line-height:5px;top:521.5px;left:615.60px;transform:translateX(-100%);">40%</span>
<span class="t k c" style="font-size:4.45px;color:#1a1a1a;line-height:5px;top:521.5px;left:645.60px;transform:translateX(-100%);">3-May-19</span>
<span class="t k c" style="font-size:4.45px;color:#1a1a1a;line-height:5px;top:521.5px;left:678.10px;transform:translateX(-100%);">7%</span>
<span class="t k c" style="font-size:4.45px;color:#1a1a1a;line-height:5px;top:521.5px;left:708.10px;transform:translateX(-100%);">11-Jul-19</span>
<span class="t k c" style="font-size:4.45px;color:#1a1a1a;line-height:5px;top:521.5px;left:730.60px;transform:translateX(-100%);">20%</span>
<span class="t k c" style="font-size:4.45px;color:#1a1a1a;line-height:5px;top:521.5px;left:762.30px;transform:translateX(-100%);">149.154 €</span>
<span class="t k c" style="font-size:4.45px;color:#1a1a1a;line-height:5px;top:521.5px;left:792.40px;transform:translateX(-100%);">334.213 €</span>
<span class="t k c" style="font-size:4.45px;color:#1a1a1a;line-height:5px;top:521.5px;left:794.70px;">Gustav Wulff</span>
<span class="t k c" style="font-size:4.45px;color:#1a1a1a;line-height:5px;top:521.5px;left:842.40px;">Julius Hartmann</span>
<span class="t k c" style="font-size:4.45px;color:#1a1a1a;line-height:5px;top:521.5px;left:890.10px;">Jannik Richter</span>
<span class="t k c" style="font-size:4.45px;color:#1a1a1a;line-height:5px;top:521.5px;left:937.80px;">Philipp Schäfer</span>
<div style="left:984.10px;top:521.5px;width:29.70px;height:5px;overflow:hidden;"><span class="t k c" style="font-size:4.45px;color:#1a1a1a;line-height:5px;top:0px;left:1.20px;">Rita Schönberg</span></div>
<div style="left:55.10px;top:310.54px;width:43.60px;height:15.26px;border:0.65px solid #2f5c8c;"></div>
<div style="left:97.70px;top:324.70px;width:1.50px;height:1.50px;background:#2f5c8c;"></div>
<div style="left:233.10px;top:99.10px;width:565.20px;height:358.60px;background:#fff;box-shadow:0 .5px 5px .5px rgba(0,0,0,.30);border:0.7px solid #93abc6;border-top:none;"></div>
<div style="left:233.10px;top:99.10px;width:565.20px;height:14.10px;background:#0c4677;"></div>
<svg style="left:787.60px;top:104.20px" width="4.6" height="4.6" viewBox="0 0 4.6 4.6" ><path d="M.4.400l3.800 3.800M4.200.4.400 4.200" stroke="#cfdbe7" stroke-width=".65"/></svg>
<div style="left:255.40px;top:138.00px;width:324.10px;height:274.40px;border:0.7px solid #d3d3d3;"></div>
<div style="left:258.60px;top:136.00px;width:26.60px;height:4.00px;background:#fff;"></div>
<span class="t j" style="font-size:4.5px;color:#444;line-height:5px;top:136.0px;left:260.10px;letter-spacing:0.218px;">销售里程碑</span>
<div style="left:601.00px;top:138.00px;width:176.50px;height:274.40px;border:0.7px solid #d3d3d3;"></div>
<div style="left:604.20px;top:136.00px;width:28.00px;height:4.00px;background:#fff;"></div>
<span class="t j" style="font-size:4.5px;color:#444;line-height:5px;top:136.0px;left:605.70px;letter-spacing:0.498px;">支付里程碑</span>
<span class="t j" style="font-size:5px;color:#111;line-height:6px;top:156.0px;left:263.20px;letter-spacing:0.240px;">确定合适的冲刺结束日期，将项目分配到正确的销售期。</span>
<span class="t j" style="font-size:5px;color:#111;line-height:6px;top:161.5px;left:263.20px;letter-spacing:0.214px;">区分有交付或委托义务的合同。</span>
<span class="t j" style="font-size:5.2px;color:#000;font-weight:bold;line-height:6px;top:181.5px;left:263.20px;letter-spacing:0.255px;">项目阶段</span>
<span class="t j" style="font-size:5.2px;color:#000;font-weight:bold;line-height:6px;top:187.5px;left:418.80px;letter-spacing:0.205px;">工程</span>
<span class="t j" style="font-size:5.2px;color:#000;font-weight:bold;line-height:6px;top:187.5px;left:472.30px;letter-spacing:0.205px;">送货</span>
<span class="t j" style="font-size:5.2px;color:#000;font-weight:bold;line-height:6px;top:187.5px;left:525.70px;letter-spacing:0.205px;">调试</span>
<span class="t j" style="font-size:5.2px;color:#111;line-height:6px;top:201.0px;left:263.20px;letter-spacing:0.255px;">冲刺次数</span>
<div style="left:300.20px;top:199.20px;width:101.60px;height:8.80px;background:#fff;border:0.7px solid #8e8e8e;border-right-color:#d0d0d0;border-bottom-color:#d0d0d0;"></div>
<div style="left:395.20px;top:200.10px;width:5.80px;height:7.00px;background:#ececec;border:0.5px solid #a9a9a9;"><svg style="left:1.3px;top:2.600px" width="2.800" height="1.800" viewBox="0 0 2.800 1.800"><path d="M0 0h2.800L1.400 1.800z" fill="#222"/></svg></div>
<span class="t k" style="font-size:5.8px;color:#111;line-height:6px;top:201.5px;left:304.80px;">10</span>
<span class="t k" style="font-size:5.5px;color:#111;line-height:6px;top:200.5px;left:418.80px;letter-spacing:-0.071px;">Meeting List</span>
<span class="t k" style="font-size:5.5px;color:#111;line-height:6px;top:200.5px;left:472.30px;letter-spacing:-0.061px;">Meeting List,</span>
<span class="t k" style="font-size:5.5px;color:#111;line-height:6px;top:206.5px;left:472.30px;letter-spacing:-0.111px;">Sales View</span>
<span class="t k" style="font-size:5.5px;color:#111;line-height:6px;top:200.5px;left:525.70px;letter-spacing:-0.061px;">Meeting List,</span>
<span class="t k" style="font-size:5.5px;color:#111;line-height:6px;top:206.5px;left:525.70px;letter-spacing:-0.111px;">Sales View</span>
<svg style="left:0;top:0" width="1024" height="556" viewBox="0 0 1024 556"><rect x="300.55" y="221.75" width="101.300" height="8.600" fill="#fff" stroke="#bdbdbd" stroke-width=".7"/><rect x="300.55" y="234.79" width="101.300" height="8.600" fill="#fff" stroke="#bdbdbd" stroke-width=".7"/><rect x="300.55" y="246.48" width="101.300" height="8.600" fill="#fff" stroke="#bdbdbd" stroke-width=".7"/><rect x="300.55" y="258.17" width="101.300" height="8.600" fill="#fff" stroke="#bdbdbd" stroke-width=".7"/><rect x="300.55" y="269.86" width="101.300" height="8.600" fill="#fff" stroke="#bdbdbd" stroke-width=".7"/><rect x="300.55" y="281.55" width="101.300" height="8.600" fill="#fff" stroke="#bdbdbd" stroke-width=".7"/><rect x="300.55" y="293.24" width="101.300" height="8.600" fill="#fff" stroke="#bdbdbd" stroke-width=".7"/><rect x="300.55" y="304.93" width="101.300" height="8.600" fill="#fff" stroke="#bdbdbd" stroke-width=".7"/><rect x="300.55" y="316.62" width="101.300" height="8.600" fill="#fff" stroke="#bdbdbd" stroke-width=".7"/><rect x="300.55" y="328.31" width="101.300" height="8.600" fill="#fff" stroke="#bdbdbd" stroke-width=".7"/><rect x="300.55" y="340.00" width="101.300" height="8.600" fill="#fff" stroke="#cfcfcf" stroke-width=".7"/><rect x="300.55" y="351.69" width="101.300" height="8.600" fill="#fff" stroke="#cfcfcf" stroke-width=".7"/><rect x="300.55" y="363.38" width="101.300" height="8.600" fill="#fff" stroke="#cfcfcf" stroke-width=".7"/><rect x="300.55" y="375.07" width="101.300" height="8.600" fill="#fff" stroke="#cfcfcf" stroke-width=".7"/><rect x="300.55" y="386.76" width="101.300" height="8.600" fill="#fff" stroke="#cfcfcf" stroke-width=".7"/><rect x="650.55" y="221.75" width="101.300" height="8.600" fill="#fff" stroke="#bdbdbd" stroke-width=".7"/><rect x="650.55" y="234.79" width="101.300" height="8.600" fill="#fff" stroke="#bdbdbd" stroke-width=".7"/><rect x="650.55" y="246.48" width="101.300" height="8.600" fill="#fff" stroke="#bdbdbd" stroke-width=".7"/><rect x="650.55" y="258.17" width="101.300" height="8.600" fill="#fff" stroke="#cfcfcf" stroke-width=".7"/><rect x="650.55" y="269.86" width="101.300" height="8.600" fill="#fff" stroke="#cfcfcf" stroke-width=".7"/><circle cx="421.60" cy="226.20" r="1.700" fill="#fff" stroke="#3c3c3c" stroke-width=".6"/><circle cx="475.10" cy="226.20" r="1.700" fill="#fff" stroke="#3c3c3c" stroke-width=".6"/><circle cx="528.60" cy="226.20" r="1.700" fill="#fff" stroke="#3c3c3c" stroke-width=".6"/><circle cx="421.60" cy="239.04" r="1.700" fill="#fff" stroke="#3c3c3c" stroke-width=".6"/><circle cx="475.10" cy="239.04" r="1.700" fill="#fff" stroke="#3c3c3c" stroke-width=".6"/><circle cx="528.60" cy="239.04" r="1.700" fill="#fff" stroke="#3c3c3c" stroke-width=".6"/><circle cx="421.60" cy="250.73" r="1.700" fill="#fff" stroke="#3c3c3c" stroke-width=".6"/><circle cx="421.60" cy="250.73" r=".95" fill="#111"/><circle cx="475.10" cy="250.73" r="1.700" fill="#fff" stroke="#3c3c3c" stroke-width=".6"/><circle cx="528.60" cy="250.73" r="1.700" fill="#fff" stroke="#3c3c3c" stroke-width=".6"/><circle cx="421.60" cy="262.42" r="1.700" fill="#fff" stroke="#3c3c3c" stroke-width=".6"/><circle cx="475.10" cy="262.42" r="1.700" fill="#fff" stroke="#3c3c3c" stroke-width=".6"/><circle cx="528.60" cy="262.42" r="1.700" fill="#fff" stroke="#3c3c3c" stroke-width=".6"/><circle cx="421.60" cy="274.11" r="1.700" fill="#fff" stroke="#3c3c3c" stroke-width=".6"/><circle cx="475.10" cy="274.11" r="1.700" fill="#fff" stroke="#3c3c3c" stroke-width=".6"/><circle cx="528.60" cy="274.11" r="1.700" fill="#fff" stroke="#3c3c3c" stroke-width=".6"/><circle cx="421.60" cy="285.80" r="1.700" fill="#fff" stroke="#3c3c3c" stroke-width=".6"/><circle cx="475.10" cy="285.80" r="1.700" fill="#fff" stroke="#3c3c3c" stroke-width=".6"/><circle cx="528.60" cy="285.80" r="1.700" fill="#fff" stroke="#3c3c3c" stroke-width=".6"/><circle cx="421.60" cy="297.49" r="1.700" fill="#fff" stroke="#3c3c3c" stroke-width=".6"/><circle cx="475.10" cy="297.49" r="1.700" fill="#fff" stroke="#3c3c3c" stroke-width=".6"/><circle cx="528.60" cy="297.49" r="1.700" fill="#fff" stroke="#3c3c3c" stroke-width=".6"/><circle cx="421.60" cy="309.18" r="1.700" fill="#fff" stroke="#3c3c3c" stroke-width=".6"/><circle cx="475.10" cy="309.18" r="1.700" fill="#fff" stroke="#3c3c3c" stroke-width=".6"/><circle cx="528.60" cy="309.18" r="1.700" fill="#fff" stroke="#3c3c3c" stroke-width=".6"/><circle cx="421.60" cy="320.87" r="1.700" fill="#fff" stroke="#3c3c3c" stroke-width=".6"/><circle cx="475.10" cy="320.87" r="1.700" fill="#fff" stroke="#3c3c3c" stroke-width=".6"/><circle cx="475.10" cy="320.87" r=".95" fill="#111"/><circle cx="528.60" cy="320.87" r="1.700" fill="#fff" stroke="#3c3c3c" stroke-width=".6"/><circle cx="421.60" cy="332.56" r="1.700" fill="#fff" stroke="#3c3c3c" stroke-width=".6"/><circle cx="475.10" cy="332.56" r="1.700" fill="#fff" stroke="#3c3c3c" stroke-width=".6"/><circle cx="528.60" cy="332.56" r="1.700" fill="#fff" stroke="#3c3c3c" stroke-width=".6"/><circle cx="528.60" cy="332.56" r=".95" fill="#111"/><circle cx="421.60" cy="344.25" r="1.700" fill="#fff" stroke="#3c3c3c" stroke-width=".6"/><circle cx="475.10" cy="344.25" r="1.700" fill="#fff" stroke="#3c3c3c" stroke-width=".6"/><circle cx="528.60" cy="344.25" r="1.700" fill="#fff" stroke="#3c3c3c" stroke-width=".6"/><circle cx="421.60" cy="355.94" r="1.700" fill="#fff" stroke="#3c3c3c" stroke-width=".6"/><circle cx="475.10" cy="355.94" r="1.700" fill="#fff" stroke="#3c3c3c" stroke-width=".6"/><circle cx="528.60" cy="355.94" r="1.700" fill="#fff" stroke="#3c3c3c" stroke-width=".6"/><circle cx="421.60" cy="367.63" r="1.700" fill="#fff" stroke="#3c3c3c" stroke-width=".6"/><circle cx="475.10" cy="367.63" r="1.700" fill="#fff" stroke="#3c3c3c" stroke-width=".6"/><circle cx="528.60" cy="367.63" r="1.700" fill="#fff" stroke="#3c3c3c" stroke-width=".6"/><circle cx="421.60" cy="379.32" r="1.700" fill="#fff" stroke="#3c3c3c" stroke-width=".6"/><circle cx="475.10" cy="379.32" r="1.700" fill="#fff" stroke="#3c3c3c" stroke-width=".6"/><circle cx="528.60" cy="379.32" r="1.700" fill="#fff" stroke="#3c3c3c" stroke-width=".6"/><circle cx="421.60" cy="391.01" r="1.700" fill="#fff" stroke="#3c3c3c" stroke-width=".6"/><circle cx="475.10" cy="391.01" r="1.700" fill="#fff" stroke="#3c3c3c" stroke-width=".6"/><circle cx="528.60" cy="391.01" r="1.700" fill="#fff" stroke="#3c3c3c" stroke-width=".6"/></svg>
<span class="t k" style="font-size:5.5px;color:#111;line-height:6px;top:225.5px;left:263.20px;letter-spacing:-0.083px;">Sprint 1</span>
<span class="t j" style="font-size:5.4px;color:#111;line-height:6px;top:224.0px;left:304.60px;letter-spacing:0.252px;">订单明确</span>
<span class="t k" style="font-size:5.5px;color:#111;line-height:6px;top:236.0px;left:263.20px;letter-spacing:-0.083px;">Sprint 2</span>
<span class="t j" style="font-size:5.4px;color:#111;line-height:6px;top:236.5px;left:304.60px;letter-spacing:0.252px;">发布项目</span>
<span class="t k" style="font-size:5.5px;color:#111;line-height:6px;top:248.0px;left:263.20px;letter-spacing:-0.083px;">Sprint 3</span>
<span class="t j" style="font-size:5.4px;color:#111;line-height:6px;top:248.5px;left:304.60px;letter-spacing:0.202px;">工程</span>
<span class="t k" style="font-size:5.5px;color:#111;line-height:6px;top:259.5px;left:263.20px;letter-spacing:-0.083px;">Sprint 4</span>
<span class="t j" style="font-size:5.4px;color:#111;line-height:6px;top:260.0px;left:304.60px;letter-spacing:0.202px;">软件</span>
<span class="t k" style="font-size:5.5px;color:#111;line-height:6px;top:271.0px;left:263.20px;letter-spacing:-0.083px;">Sprint 5</span>
<span class="t j" style="font-size:5.4px;color:#111;line-height:6px;top:272.0px;left:304.60px;letter-spacing:0.252px;">长期采购</span>
<span class="t k" style="font-size:5.5px;color:#111;line-height:6px;top:283.0px;left:263.20px;letter-spacing:-0.083px;">Sprint 6</span>
<span class="t j" style="font-size:5.4px;color:#111;line-height:6px;top:283.5px;left:304.60px;letter-spacing:0.202px;">购买</span>
<span class="t k" style="font-size:5.5px;color:#111;line-height:6px;top:294.5px;left:263.20px;letter-spacing:-0.083px;">Sprint 7</span>
<span class="t j" style="font-size:5.4px;color:#111;line-height:6px;top:295.0px;left:304.60px;letter-spacing:0.223px;">组装(机械/电气)</span>
<span class="t k" style="font-size:5.5px;color:#111;line-height:6px;top:306.5px;left:263.20px;letter-spacing:-0.083px;">Sprint 8</span>
<span class="t j" style="font-size:5.4px;color:#111;line-height:6px;top:307.0px;left:304.60px;letter-spacing:0.202px;">调试</span>
<span class="t k" style="font-size:5.5px;color:#111;line-height:6px;top:318.0px;left:263.20px;letter-spacing:-0.083px;">Sprint 9</span>
<span class="t j" style="font-size:5.4px;color:#111;line-height:6px;top:318.5px;left:304.60px;letter-spacing:0.242px;">包装与运输</span>
<span class="t k" style="font-size:5.5px;color:#111;line-height:6px;top:329.5px;left:263.20px;letter-spacing:-0.124px;">Sprint 10</span>
<span class="t j" style="font-size:5.4px;color:#111;line-height:6px;top:330.5px;left:304.60px;letter-spacing:0.252px;">最终验收</span>
<span class="t k" style="font-size:5.5px;color:#b4b4b4;line-height:6px;top:341.5px;left:263.20px;letter-spacing:-0.079px;">Sprint 11</span>
<span class="t k" style="font-size:5.8px;color:#b4b4b4;line-height:6px;top:342.0px;left:304.60px;letter-spacing:-0.108px;">Sprint11</span>
<span class="t k" style="font-size:5.5px;color:#b4b4b4;line-height:6px;top:353.0px;left:263.20px;letter-spacing:-0.124px;">Sprint 12</span>
<span class="t k" style="font-size:5.8px;color:#b4b4b4;line-height:6px;top:354.0px;left:304.60px;letter-spacing:-0.162px;">Sprint12</span>
<span class="t k" style="font-size:5.5px;color:#b4b4b4;line-height:6px;top:364.5px;left:263.20px;letter-spacing:-0.124px;">Sprint 13</span>
<span class="t k" style="font-size:5.8px;color:#b4b4b4;line-height:6px;top:365.5px;left:304.60px;letter-spacing:-0.162px;">Sprint13</span>
<span class="t k" style="font-size:5.5px;color:#b4b4b4;line-height:6px;top:376.5px;left:263.20px;letter-spacing:-0.124px;">Sprint 14</span>
<span class="t k" style="font-size:5.8px;color:#b4b4b4;line-height:6px;top:377.0px;left:304.60px;letter-spacing:-0.162px;">Sprint14</span>
<span class="t k" style="font-size:5.5px;color:#b4b4b4;line-height:6px;top:388.0px;left:263.20px;letter-spacing:-0.124px;">Sprint 15</span>
<span class="t k" style="font-size:5.8px;color:#b4b4b4;line-height:6px;top:389.0px;left:304.60px;letter-spacing:-0.162px;">Sprint15</span>
<svg style="left:255.00px;top:423.00px" width="134" height="17" viewBox="0 0 134 17" ><rect x=".35" y=".5" width="133.300" height="15.800" fill="#fff" stroke="#c6c6c6" stroke-width=".7"/></svg>
<span class="t j" style="font-size:5.1px;color:#111;line-height:6px;top:430.0px;left:287.00px;letter-spacing:0.219px;">关闭而不保存更改</span>
<svg style="left:404.00px;top:423.00px" width="135" height="17" viewBox="0 0 135 17" ><rect x=".4" y=".2" width="133.600" height="16.400" fill="#0d3f70"/></svg>
<span class="t j" style="font-size:5.1px;color:#fff;line-height:6px;top:430.0px;left:438.50px;letter-spacing:0.306px;">关闭并保存更改</span>
<span class="t j" style="font-size:5.2px;color:#000;font-weight:bold;line-height:6px;top:181.5px;left:609.80px;letter-spacing:0.205px;">里程碑配置</span>
<span class="t j" style="font-size:5.2px;color:#111;line-height:6px;top:201.0px;left:609.80px;letter-spacing:0.255px;">付款数量</span>
<div style="left:650.20px;top:199.20px;width:101.80px;height:8.80px;background:#fff;border:0.7px solid #8e8e8e;border-right-color:#d0d0d0;border-bottom-color:#d0d0d0;"></div>
<div style="left:745.40px;top:200.10px;width:5.80px;height:7.00px;background:#ececec;border:0.5px solid #a9a9a9;"><svg style="left:1.3px;top:2.600px" width="2.800" height="1.800" viewBox="0 0 2.800 1.800"><path d="M0 0h2.800L1.400 1.800z" fill="#222"/></svg></div>
<span class="t k" style="font-size:5.8px;color:#111;line-height:6px;top:201.5px;left:654.80px;">3</span>
<span class="t j" style="font-size:5.3px;color:#111;line-height:6px;top:225.0px;left:609.80px;letter-spacing:0.177px;">里程碑 1</span>
<span class="t j" style="font-size:5.4px;color:#111;line-height:6px;top:224.0px;left:654.50px;letter-spacing:0.065px;">付款1</span>
<span class="t j" style="font-size:5.3px;color:#111;line-height:6px;top:236.0px;left:609.80px;letter-spacing:0.177px;">里程碑 2</span>
<span class="t j" style="font-size:5.4px;color:#111;line-height:6px;top:236.5px;left:654.50px;letter-spacing:0.065px;">付款2</span>
<span class="t j" style="font-size:5.3px;color:#111;line-height:6px;top:247.5px;left:609.80px;letter-spacing:0.177px;">里程碑 3</span>
<span class="t j" style="font-size:5.4px;color:#111;line-height:6px;top:248.5px;left:654.50px;letter-spacing:0.074px;">付款 3</span>
<span class="t j" style="font-size:5.3px;color:#b4b4b4;line-height:6px;top:259.5px;left:609.80px;letter-spacing:0.177px;">里程碑 4</span>
<span class="t j" style="font-size:5.4px;color:#b4b4b4;line-height:6px;top:260.0px;left:654.50px;letter-spacing:0.074px;">付款 4</span>
<span class="t j" style="font-size:5.3px;color:#b4b4b4;line-height:6px;top:271.0px;left:609.80px;letter-spacing:0.177px;">里程碑 5</span>
<span class="t j" style="font-size:5.4px;color:#b4b4b4;line-height:6px;top:272.0px;left:654.50px;letter-spacing:0.074px;">付款 5</span>
<div style="left:0.00px;top:534.10px;width:1024.00px;height:21.90px;background:#ededed;"></div>
<div style="left:0.00px;top:533.80px;width:1024.00px;height:0.60px;background:#d5d5d5;"></div>
<svg style="left:8.00px;top:537.40px" width="16" height="4" viewBox="0 0 16 4" ><path d="M2.700.400 1 2l1.700 1.600zM11.900.4 13.600 2 11.900 3.600z" fill="#cdcdcd"/></svg>
<div style="left:37.50px;top:534.30px;width:67.30px;height:9.70px;background:linear-gradient(#f0f0f0 25%,#c3cedb 70%,#8aa2be 100%);border-bottom:.6px solid #6f8db0;"></div>
<span class="t" style="font-size:6.5px;color:#14457a;font-weight:bold;line-height:7px;top:535.5px;left:40.60px;letter-spacing:0.069px;">Project Master Data</span>
<div style="left:106.50px;top:534.30px;width:44.10px;height:10.00px;background:#0d3f70;"></div>
<span class="t" style="font-size:6.8px;color:#fff;line-height:7px;top:535.5px;left:110.70px;letter-spacing:-0.062px;">Meeting List</span>
<div style="left:152.20px;top:534.30px;width:30.40px;height:10.00px;background:#0d3f70;"></div>
<span class="t" style="font-size:6.8px;color:#fff;line-height:7px;top:535.5px;left:155.70px;letter-spacing:-0.180px;">Invoices</span>
<span class="t" style="font-size:6.8px;color:#444;line-height:7px;top:535.5px;left:188.00px;letter-spacing:-0.211px;">Task Tracker</span>
<span class="t" style="font-size:6.8px;color:#444;line-height:7px;top:535.5px;left:233.60px;letter-spacing:-0.131px;">Translations</span>
<span class="t" style="font-size:6.8px;color:#444;line-height:7px;top:535.5px;left:278.00px;letter-spacing:-0.257px;">Dashboard_4.0.3</span>
<div style="left:331.80px;top:534.30px;width:30.40px;height:10.00px;background:#000;"></div>
<span class="t" style="font-size:6.8px;color:#fff;line-height:7px;top:535.5px;left:335.70px;letter-spacing:-0.233px;">Settings</span>
<span class="t" style="font-size:6.8px;color:#444;line-height:7px;top:535.5px;left:367.70px;letter-spacing:-0.165px;">DemoDataSheet</span>
<div style="left:420.80px;top:534.30px;width:32.20px;height:10.00px;background:#0d3f70;"></div>
<span class="t" style="font-size:6.8px;color:#fff;line-height:7px;top:535.5px;left:424.50px;letter-spacing:-0.160px;">Bindings</span>
<div style="left:454.50px;top:534.30px;width:32.30px;height:10.00px;background:#000;"></div>
<span class="t" style="font-size:6.8px;color:#fff;line-height:7px;top:535.5px;left:457.70px;letter-spacing:-0.202px;">CopyLog</span>
<div style="left:184.60px;top:535.00px;width:0.60px;height:8.50px;background:#d0d0d0;"></div>
<div style="left:229.20px;top:535.00px;width:0.60px;height:8.50px;background:#d0d0d0;"></div>
<div style="left:273.30px;top:535.00px;width:0.60px;height:8.50px;background:#d0d0d0;"></div>
<svg style="left:500.80px;top:536.40px" width="5.6" height="5.6" viewBox="0 0 5.6 5.6" ><circle cx="2.800" cy="2.800" r="2.400" fill="none" stroke="#777" stroke-width=".5"/><path d="M2.800 1.500v2.600M1.500 2.800h2.600" stroke="#777" stroke-width=".5"/></svg>
<div style="left:921.00px;top:534.00px;width:103.00px;height:11.20px;background:#f3f3f3;"></div>
<svg style="left:924.00px;top:537.00px" width="90" height="5" viewBox="0 0 90 5" ><path d="M2.500 .2v.9M2.500 1.900v.9M2.500 3.600v.9" stroke="#999" stroke-width=".7"/><path d="M13.300.500 10.600 2.500l2.700 2z" fill="#444"/><rect x="16.200" y=".5" width="9" height="4" rx="2" fill="#5a5a5a"/><path d="M84.600.5 87.300 2.500l-2.700 2z" fill="#444"/></svg>
<span class="t k" style="font-size:5.2px;color:#333;line-height:6px;top:549.0px;left:3.50px;letter-spacing:-0.165px;">ProMTO_4.0.3</span>
<span class="t k" style="font-size:5.2px;color:#333;line-height:6px;top:549.0px;left:44.75px;letter-spacing:-0.084px;">ProMTO_150</span>
<span class="t k" style="font-size:5.2px;color:#333;line-height:6px;top:549.0px;left:85.00px;letter-spacing:-0.004px;">最后一张表的更新: 14-Dec-21, 20:14</span>
<span class="t k" style="font-size:5.2px;color:#333;line-height:6px;top:549.0px;left:179.00px;letter-spacing:0.019px;">用户: Veronica Freital</span>
<span class="t j" style="font-size:5.2px;color:#333;line-height:6px;top:549.0px;left:243.00px;letter-spacing:-0.080px;">用户在线: 1</span>
<span class="t k" style="font-size:5.2px;color:#333;line-height:6px;top:549.0px;left:279.25px;letter-spacing:-0.123px;">语言: 中文 | Chinese</span>
<span class="t k" style="font-size:5.2px;color:#333;line-height:6px;top:549.0px;left:335.00px;letter-spacing:-0.010px;">数据集: Demo</span>
<span class="t k" style="font-size:5.2px;color:#333;line-height:6px;top:549.0px;left:377.75px;letter-spacing:-0.237px;">主模式: On</span>
<span class="t j" style="font-size:5.2px;color:#333;line-height:6px;top:549.0px;left:409.75px;letter-spacing:-0.102px;">访问冲突: 没有</span>
<span class="t k" style="font-size:5.2px;color:#333;line-height:6px;top:549.0px;left:40.75px;transform:translateX(-50%);">|</span>
<span class="t k" style="font-size:5.2px;color:#333;line-height:6px;top:549.0px;left:80.00px;transform:translateX(-50%);">|</span>
<span class="t k" style="font-size:5.2px;color:#333;line-height:6px;top:549.0px;left:174.25px;transform:translateX(-50%);">|</span>
<span class="t k" style="font-size:5.2px;color:#333;line-height:6px;top:549.0px;left:237.75px;transform:translateX(-50%);">|</span>
<span class="t k" style="font-size:5.2px;color:#333;line-height:6px;top:549.0px;left:274.00px;transform:translateX(-50%);">|</span>
<span class="t k" style="font-size:5.2px;color:#333;line-height:6px;top:549.0px;left:330.25px;transform:translateX(-50%);">|</span>
<span class="t k" style="font-size:5.2px;color:#333;line-height:6px;top:549.0px;left:373.00px;transform:translateX(-50%);">|</span>
<span class="t k" style="font-size:5.2px;color:#333;line-height:6px;top:549.0px;left:406.25px;transform:translateX(-50%);">|</span>
<div style="left:878.80px;top:545.50px;width:18.80px;height:10.50px;background:#dadada;"></div>
<svg style="left:884.30px;top:547.00px" width="7" height="6.4" viewBox="0 0 7 6.4" ><rect x=".4" y=".4" width="6.200" height="5.600" fill="none" stroke="#4a4a4a" stroke-width=".8"/><path d="M.4 2.300h6.200M.4 4.200h6.200M2.500.4v5.600M4.600.4v5.600" stroke="#4a4a4a" stroke-width=".7"/></svg>
<svg style="left:904.30px;top:547.00px" width="7.4" height="6.4" viewBox="0 0 7.4 6.4" ><rect x=".4" y=".4" width="6.600" height="5.600" fill="none" stroke="#4a4a4a" stroke-width=".8"/><rect x="2.100" y="1.500" width="3.200" height="3.400" fill="none" stroke="#4a4a4a" stroke-width=".6"/><path d="M2.100 2.600h3.200M2.100 3.700h3.200" stroke="#4a4a4a" stroke-width=".4"/></svg>
<svg style="left:924.20px;top:547.00px" width="7" height="6.4" viewBox="0 0 7 6.4" ><rect x=".4" y=".4" width="6.200" height="5.600" fill="none" stroke="#4a4a4a" stroke-width=".8"/><path d="M2.400.4v3h4.200M4.400.4v3" fill="none" stroke="#4a4a4a" stroke-width=".7"/></svg>
<svg style="left:940.00px;top:547.00px" width="64" height="7" viewBox="0 0 64 7" ><path d="M.8 3.650h2.600" stroke="#777" stroke-width=".6"/><path d="M6.800 3.650h49.200" stroke="#8a8a8a" stroke-width=".5"/><path d="M31.500 2.600v2.100" stroke="#666" stroke-width=".5"/><rect x="19.200" y=".8" width="1.800" height="5.600" fill="#444"/><path d="M59.200 3.650h3.200M60.800 2v3.300" stroke="#777" stroke-width=".6"/></svg>
<span class="t k" style="font-size:5px;color:#444;line-height:6px;top:548.5px;left:1009.00px;letter-spacing:-0.050px;">55 %</span>
<div style="left:0.00px;top:555.40px;width:1024.00px;height:0.60px;background:#cfd8e3;"></div>
</div></body></html>
